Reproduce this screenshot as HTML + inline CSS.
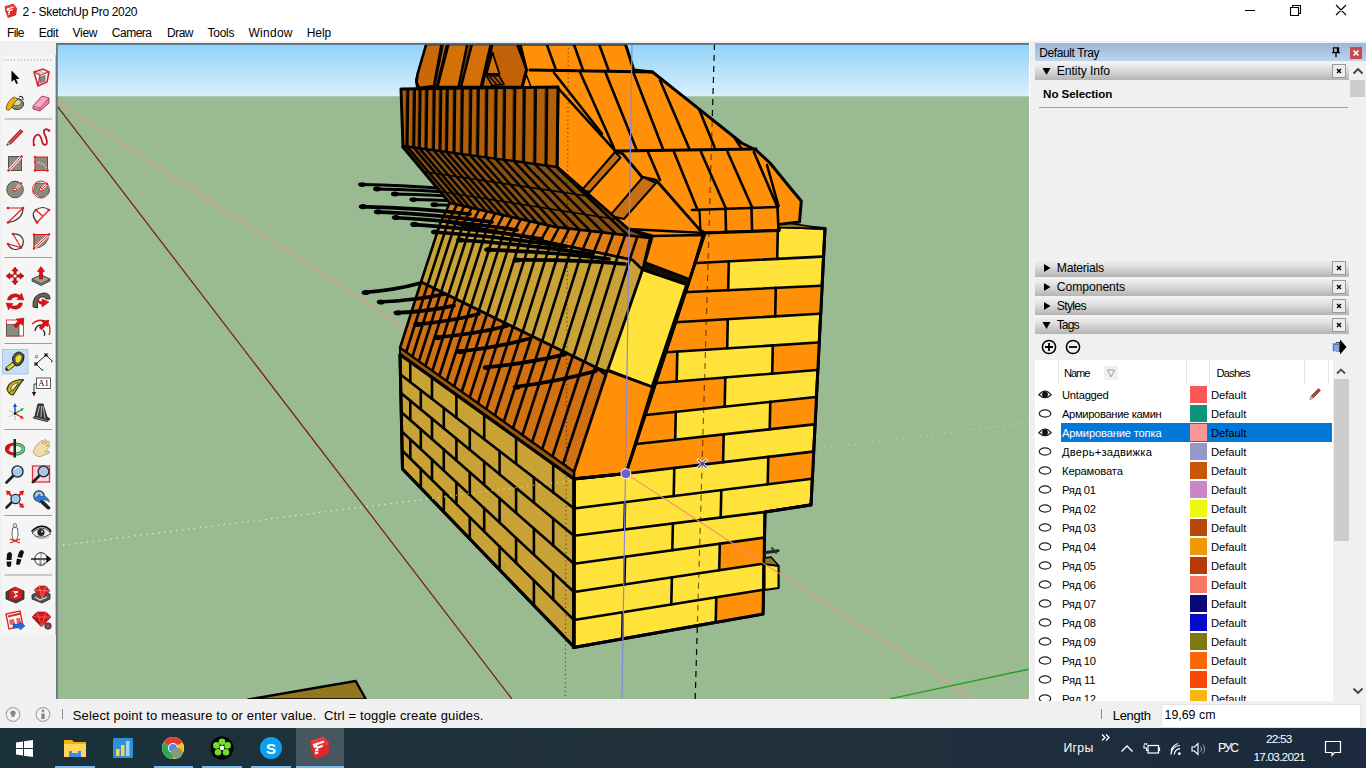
<!DOCTYPE html>
<html><head><meta charset="utf-8"><title>2 - SketchUp Pro 2020</title>
<style>
*{box-sizing:border-box;margin:0;padding:0}
html,body{width:1366px;height:768px;overflow:hidden;background:#f0f0f0;font-family:"Liberation Sans",sans-serif;font-size:12px;color:#000}
div,span{white-space:nowrap}
.a{position:absolute}
#title{position:absolute;left:0;top:0;width:1366px;height:22px;background:#fff}
#menu{position:absolute;left:0;top:22px;width:1366px;height:19px;background:#fff}
#menu span{position:absolute;top:4px;font-size:12px;letter-spacing:-0.3px}
#vp{position:absolute;left:56px;top:43px;width:974px;height:656px;overflow:hidden;background:#9aba92}
#tb{position:absolute;left:2px;top:55px;width:53px;height:580px;background:#f5f5f5;border-right:1px solid #c4c4c4;box-sizing:content-box}
#status{position:absolute;left:0;top:699px;width:1366px;height:29px;background:#f0f0f0}
#task{position:absolute;left:0;top:728px;width:1366px;height:40px;background:linear-gradient(90deg,#1a313a 0%,#22323c 50%,#1b2a3d 100%)}
#tray{position:absolute;left:1035px;top:43px;width:331px;height:658px;z-index:2;background:#f0f0f0;overflow:hidden}
.hd{position:absolute;left:0;width:314px;height:18px;background:linear-gradient(#f4f4f4 0%,#e2e2e2 35%,#b4b4b4 100%);font-size:12.5px}
.row{position:absolute;left:0;width:296px;height:19px;font-size:11.6px}
.row .sw{position:absolute;left:155px;top:1px;width:17px;height:17px}
</style></head><body>
<div id="title"><svg class="a" style="left:4px;top:3px" width="14" height="16" viewBox="0 0 22 24"><path d="M1,5 L14.5,0.5 L20.5,8 L19,18.5 L6,23 L2,12.5 Z" fill="#e3262b"/><path d="M1,5 L14.5,0.5 L20.5,8 L8,11.5Z" fill="#f0383c"/><path d="M3.5,8.3 L14.5,4.8 L15.2,6.6 L8,9 L8.4,10.6 L13.5,9 L14,10.8 L9,12.4 L9.6,14.6 L6.4,15.6 L5.8,13.6 L7.6,13 L7.2,11.4 L5,12 Z" fill="#fff"/><path d="M5.6,16.6 L9,15.5 L9.5,17.3 L6.2,18.4Z" fill="#fff"/></svg>
<span class="a" style="left:22.5px;top:4.5px;font-size:12px;letter-spacing:-0.32px;">2 - SketchUp Pro 2020</span>
<svg class="a" style="left:1230px;top:0" width="136" height="22" viewBox="0 0 136 22"><path d="M15,10.5 H25 M60.5,7.5 h8 v8 h-8 z M62.5,7.5 v-2 h8 v8 h-2 M106,5 l10,10 M116,5 l-10,10" stroke="#000" stroke-width="1.1" fill="none"/></svg></div>
<div id="menu"><span class="a" style="left:7.1px;top:3.5px;font-size:12px;letter-spacing:-0.65px;">File</span><span class="a" style="left:38.7px;top:3.5px;font-size:12px;letter-spacing:-0.30px;">Edit</span><span class="a" style="left:72.5px;top:3.5px;font-size:12px;letter-spacing:-0.27px;">View</span><span class="a" style="left:111.8px;top:3.5px;font-size:12px;letter-spacing:-0.50px;">Camera</span><span class="a" style="left:167.0px;top:3.5px;font-size:12px;letter-spacing:-0.51px;">Draw</span><span class="a" style="left:207.5px;top:3.5px;font-size:12px;letter-spacing:-0.25px;">Tools</span><span class="a" style="left:248.5px;top:3.5px;font-size:12px;letter-spacing:0.26px;">Window</span><span class="a" style="left:306.8px;top:3.5px;font-size:12px;letter-spacing:-0.13px;">Help</span></div>
<div id="tb"><svg class="a" style="left:0;top:0" width="54" height="580" viewBox="2 55 54 580">
<line x1="4" y1="60" x2="53" y2="60" stroke="#a8a8a8" stroke-width="1.2" stroke-dasharray="1.4 1.9"/>
<rect x="2.5" y="349.5" width="25.5" height="24.5" fill="#c7ddf5" stroke="#a4c8f0" stroke-width="1"/>
<line x1="4.5" y1="119" x2="52" y2="119" stroke="#9c9c9c" stroke-width="1.2"/>
<line x1="4.5" y1="257.5" x2="52" y2="257.5" stroke="#9c9c9c" stroke-width="1.2"/>
<line x1="4.5" y1="343.5" x2="52" y2="343.5" stroke="#9c9c9c" stroke-width="1.2"/>
<line x1="4.5" y1="429.5" x2="52" y2="429.5" stroke="#9c9c9c" stroke-width="1.2"/>
<line x1="4.5" y1="515.5" x2="52" y2="515.5" stroke="#9c9c9c" stroke-width="1.2"/>
<line x1="4.5" y1="575" x2="52" y2="575" stroke="#9c9c9c" stroke-width="1.2"/>
<g transform="translate(15,77)"><path d="M-3.5,-6.5 L-3.5,5 L-0.8,2.6 L1.2,7 L3,6.2 L1,1.9 L4.6,1.7 Z" fill="#000"/></g>
<g transform="translate(41,77)"><path d="M-7,-5 L2,-8 L8,-5 L6,5 L-3,9 Z" fill="none" stroke="#d82030" stroke-width="1.6"/><path d="M-7,-5 L-1,-2 L8,-5 M-1,-2 L-3,9" stroke="#d82030" stroke-width="1.3" fill="none"/><path d="M-1,0 L4,-1.5 L4,4 L-1,6Z" fill="#8a8a80" stroke="#555" stroke-width=".6"/><path d="M-4,-4 L0,-5.5 L4,-4 L0,-2.5Z" fill="#ddd" stroke="#888" stroke-width=".5"/></g>
<g transform="translate(15,103)"><ellipse cx="2" cy="1" rx="6.5" ry="5.5" fill="#8c8c70" stroke="#333" stroke-width="1"/><ellipse cx="1.5" cy="-0.5" rx="4.5" ry="3" fill="#d8d8b8" stroke="#444" stroke-width=".6"/><path d="M-1,-6 Q-8,-2 -9,6 Q-6,9 -3,4 Q-1,-1 3,-4 Z" fill="#f0b010" stroke="#604000" stroke-width=".8"/><path d="M4,-6 Q8,-8 8,-3" fill="none" stroke="#333" stroke-width="1.2"/></g>
<g transform="translate(41,103)"><path d="M-8,3 L1,-7 L8,-5 L8,0 L-1,8 L-8,6 Z" fill="#f080a0" stroke="#803048" stroke-width=".8"/><path d="M-8,3 L-1,5 L8,-5 M-1,5 L-1,8" stroke="#a04060" stroke-width=".7" fill="none"/><path d="M-7,3 L1.5,-6.2 L7,-4.8 L-1,4.4Z" fill="#f8a8c0"/></g>
<g transform="translate(15,137)"><path d="M-6.5,5 L5.5,-7.5 L8,-5.5 L-4.5,7.2 Z" fill="#d02828" stroke="#701010" stroke-width=".7"/><path d="M-6.5,5 L-4.5,7.2 L-8.5,8.5Z" fill="#e8c8a0" stroke="#555" stroke-width=".5"/><path d="M-8.5,8.5 L-7.4,6.6 L-6.6,7.8Z" fill="#222"/><path d="M-5.5,6 L6.5,-6.5" stroke="#f08080" stroke-width=".8"/></g>
<g transform="translate(41,137)"><path d="M-7,8 C-9,1 -4,-5 -1,-1 C2,3 0,8 4,8 C8,7 5,0 3,-4 C2,-8 6,-9 8,-6" fill="none" stroke="#c01820" stroke-width="1.7"/><circle cx="-7" cy="8" r="1.3" fill="#e01818"/><circle cx="8" cy="-6.5" r="1.3" fill="#e01818"/></g>
<g transform="translate(15,163)"><rect x="-6.5" y="-6.5" width="13" height="14" fill="#8c8c7c" stroke="#505048" stroke-width="1"/><path d="M-6.5,7.5 L6.5,-6.5" stroke="#fff" stroke-width="2.6"/><path d="M-6.5,7.5 L6.5,-6.5" stroke="#e01818" stroke-width="1" /><circle cx="-6.5" cy="7.5" r="1.2" fill="#e01818"/><circle cx="6.5" cy="-6.5" r="1.2" fill="#e01818"/></g>
<g transform="translate(41,163)"><rect x="-6" y="-6" width="12.5" height="13.5" fill="#8c8c7c" stroke="#e01818" stroke-width="1"/><path d="M-6,-1 Q4,-1 6.5,7.5" fill="none" stroke="#f0b0b0" stroke-width="1.4" stroke-dasharray="2 1"/><circle cx="-6" cy="-6" r="1.2" fill="#e01818"/><circle cx="-6" cy="7.5" r="1.2" fill="#e01818"/><circle cx="6.5" cy="7.5" r="1.2" fill="#e01818"/><circle cx="-6" cy="-1" r="1.1" fill="#e01818"/></g>
<g transform="translate(15,189)"><circle cx="0" cy="0.5" r="8.3" fill="#8c8c7c" stroke="#505048" stroke-width="1"/><path d="M0,0.5 L6,-5.5" stroke="#fff" stroke-width="2.4"/><path d="M0,0.5 L6,-5.5" stroke="#e01818" stroke-width="1"/><circle cx="0" cy="0.5" r="1.5" fill="#fff" stroke="#e01818" stroke-width="1"/><circle cx="6" cy="-5.5" r="1.2" fill="#e01818"/></g>
<g transform="translate(41,189)"><circle cx="0" cy="0.5" r="8.5" fill="#f8e8e8" stroke="#e01818" stroke-width=".9"/><path d="M-5,-6 L5.5,-5.5 L8.3,3 L0.5,9 L-7.8,3 Z" fill="#8c8c7c" stroke="#505048" stroke-width=".8"/><path d="M0,0.5 L6,-5" stroke="#fff" stroke-width="2.4"/><path d="M0,0.5 L6,-5" stroke="#e01818" stroke-width="1"/><circle cx="0" cy="0.5" r="1.5" fill="#fff" stroke="#e01818" stroke-width="1"/><circle cx="6" cy="-5" r="1.2" fill="#e01818"/></g>
<g transform="translate(15,215)"><path d="M-7,7.5 L8,-7 L-7,-7" fill="none" stroke="#e01818" stroke-width="1.1"/><path d="M8,-7 Q8,5 -7,7.5" fill="none" stroke="#333" stroke-width="1.2"/><circle cx="-7" cy="7.5" r="1.3" fill="#e01818"/><circle cx="8" cy="-7" r="1.3" fill="#e01818"/><circle cx="-7" cy="-7" r="1.3" fill="#e01818"/></g>
<g transform="translate(41,215)"><path d="M-4,7.5 L8,-5 M-5,-5 L2,1.5" fill="none" stroke="#e01818" stroke-width="1.1"/><path d="M-4,7.5 Q-11,-1 -5,-5 Q2,-10 8,-5" fill="none" stroke="#333" stroke-width="1.2"/><circle cx="-4" cy="7.5" r="1.3" fill="#e01818"/><circle cx="8" cy="-5" r="1.3" fill="#e01818"/><circle cx="-5" cy="-5" r="1.3" fill="#e01818"/></g>
<g transform="translate(15,241)"><path d="M-7,3 L6,6.5 L-2,-7" fill="none" stroke="#e01818" stroke-width="1.1"/><path d="M-2,-7 C12,-8 11,9 -0,8.5 Q-5,8 -7,3" fill="none" stroke="#333" stroke-width="1.2"/><circle cx="-7" cy="3" r="1.3" fill="#e01818"/><circle cx="6" cy="6.5" r="1.3" fill="#e01818"/><circle cx="-2" cy="-7" r="1.3" fill="#e01818"/></g>
<g transform="translate(41,241)"><path d="M-7,-6.5 L8,-6.5 Q7,6 -7,7.5 Z" fill="#8c8c7c" stroke="#505048" stroke-width=".8"/><path d="M-7,7.5 L8,-6.5" stroke="#fff" stroke-width="2.4"/><path d="M-7,7.5 L8,-6.5 M-7,-6.5 L8,-6.5 M-7,-6.5 L-7,7.5" stroke="#e01818" stroke-width="1" fill="none"/><circle cx="-7" cy="7.5" r="1.2" fill="#e01818"/><circle cx="8" cy="-6.5" r="1.2" fill="#e01818"/><circle cx="-7" cy="-6.5" r="1.2" fill="#e01818"/></g>
<g transform="translate(15,276)"><path d="M0,-9 L3.2,-5 L1.2,-5 L1.2,-1.2 L5,-1.2 L5,-3.2 L9,0 L5,3.2 L5,1.2 L1.2,1.2 L1.2,5 L3.2,5 L0,9 L-3.2,5 L-1.2,5 L-1.2,1.2 L-5,1.2 L-5,3.2 L-9,0 L-5,-3.2 L-5,-1.2 L-1.2,-1.2 L-1.2,-5 L-3.2,-5 Z" fill="#d81010" stroke="#800" stroke-width=".5"/><circle r="1.6" fill="#fff"/></g>
<g transform="translate(41,276)"><path d="M-9,3 L0,-1 L9,3 L9,5 L0,9.5 L-9,5Z" fill="#77776a" stroke="#333" stroke-width=".8"/><path d="M-9,3 L0,-1 L9,3 L0,7.5Z" fill="#a0a090" stroke="#333" stroke-width=".6"/><path d="M0,-9.5 L3.6,-4.5 L1.6,-4.5 L1.6,3 L-1.6,3 L-1.6,-4.5 L-3.6,-4.5Z" fill="#e01010" stroke="#800" stroke-width=".5"/></g>
<g transform="translate(15,301)"><path d="M-7.5,-1 A7.5,6.5 0 0 1 5,-5.5 L6.5,-8 L9,-1 L2,-1.5 L3.5,-3.5 A5,4 0 0 0 -4,-1Z" fill="#e01010" stroke="#800" stroke-width=".4"/><path d="M7.5,2 A7.5,6.5 0 0 1 -5,6.5 L-6.5,9 L-9,2 L-2,2.5 L-3.5,4.5 A5,4 0 0 0 4,2Z" fill="#e01010" stroke="#800" stroke-width=".4"/></g>
<g transform="translate(41,301)"><path d="M-8,6 Q-9,-7 3,-8 Q9,-8 9,-2 L5,-2 Q4,-5 0,-4 Q-4,-3 -3.5,7 Z" fill="#666658" stroke="#222" stroke-width=".9"/><path d="M8,1 L1,6 L1,3.5 Q-3,3 -3,-1 Q0,1.5 1,0.5 L1,-2 Z" fill="#e01010" stroke="#800" stroke-width=".4"/></g>
<g transform="translate(15,327)"><rect x="-8.5" y="-7" width="17" height="16" fill="#fff" stroke="#e04040" stroke-width="1"/><rect x="-8.5" y="-2.5" width="12.5" height="11.5" fill="#8c8c7c" stroke="#505048" stroke-width=".8"/><path d="M9,-9 L7.5,-1.5 L5.5,-3.5 L1,1 L-1.5,-1.5 L3,-6 L1,-8Z" fill="#e01010" stroke="#800" stroke-width=".4"/></g>
<g transform="translate(41,327)"><path d="M-9,-3 Q0,-11 8,-2 Q10,3 8,8" fill="none" stroke="#e02020" stroke-width="1.3"/><path d="M-6,4 Q-5,-2 0,-2 M2,3 Q5,6 3,9" fill="none" stroke="#222" stroke-width="1.3"/><path d="M8,-7 L6.5,0 L4.8,-1.8 L0.5,3 L-2,0.5 L2.3,-4.3 L0.5,-6Z" fill="#e01010" stroke="#800" stroke-width=".4"/></g>
<g transform="translate(15,361)"><path d="M-9,6.5 L-2,1 L0.5,4 L-6.5,9.5Z" fill="#e8d820" stroke="#222" stroke-width=".9"/><path d="M-9,6.5 L-6.5,9.5 L-8.5,10 L-10,8Z" fill="#222"/><path d="M-2.5,-3 Q-1,-9 5,-9 L9,-6 Q10,0 5,4 L1,5 Q-3,2 -2.5,-3Z" fill="#555" stroke="#111" stroke-width=".9"/><path d="M0,-2.5 Q1,-6.5 5,-6.5 L7,-4.8 Q7,-1 4,1.8 L1.8,2.2 Q-0.3,0.5 0,-2.5Z" fill="#f0e020" stroke="#333" stroke-width=".5"/></g>
<g transform="translate(41,361)"><path d="M-5,3 L5,-6 M-5,3 L1,9 M5,-6 L11,0" stroke="#222" stroke-width="1" fill="none"/><path d="M-6.5,1.5 L-3.5,4.5 M-6.5,4.5 L-3.5,1.5 M3.5,-7.5 L6.5,-4.5 M3.5,-4.5 L6.5,-7.5" stroke="#111" stroke-width="1.3"/><circle cx="1.5" cy="9" r="1.1" fill="#30b030"/><circle cx="11" cy="0.5" r="1.1" fill="#30b030"/><text x="-6" y="-3.5" font-size="6" font-family="Liberation Serif,serif" font-style="italic" fill="#222">a</text></g>
<g transform="translate(15,387)"><path d="M-8,2 Q-6,-7 8,-7.5 L-2,8 Q-7,7 -8,2Z" fill="#c8b818" stroke="#3a3408" stroke-width="1.2"/><path d="M-4.5,2 Q-3,-3.5 3.5,-4.5 L-2,4 Q-4,3.5 -4.5,2Z" fill="#f4f0c0" stroke="#3a3408" stroke-width=".7"/><path d="M-6,6 L9,-7" stroke="#3a3408" stroke-width=".8"/></g>
<g transform="translate(41,387)"><rect x="-4.5" y="-9" width="14" height="10.5" fill="#fff" stroke="#444" stroke-width=".9"/><text x="2.5" y="-0.8" font-size="8.5" font-family="Liberation Serif,serif" fill="#000" text-anchor="middle">A1</text><path d="M-4.5,-3 L-7,-3 L-7,6" fill="none" stroke="#222" stroke-width=".9"/><path d="M-9,5 L-5,5 L-7,9.5Z" fill="#111"/></g>
<g transform="translate(15,413)"><path d="M0,0.5 L0,-8" stroke="#1848c8" stroke-width="1.4"/><path d="M0,-10 L2,-6 L-2,-6Z" fill="#1848c8"/><path d="M0,0.5 L7,-3.5" stroke="#20a030" stroke-width="1.3"/><path d="M9,-4.8 L5.5,-4.5 L6.8,-1.8Z" fill="#20a030"/><path d="M0,0.5 L7,4.5" stroke="#d81818" stroke-width="1.3"/><path d="M9,5.8 L5.2,5.4 L6.8,2.6Z" fill="#d81818"/><path d="M0,0.5 L-6,-2.5" stroke="#e08080" stroke-width=".9" stroke-dasharray="1.5 1"/><path d="M0,0.5 L-6,4" stroke="#80c080" stroke-width=".9" stroke-dasharray="1.5 1"/><path d="M0,0.5 L0,8" stroke="#8098d8" stroke-width=".9" stroke-dasharray="1.5 1"/><circle cx="0" cy="0.5" r="1.3" fill="#111"/></g>
<g transform="translate(41,413)"><path d="M-3,-9 L2,-9 L6,4 L9,6 L6,8.5 L-8,5 L-6,3Z" fill="#3a3a34" stroke="#111" stroke-width=".8"/><path d="M-1.5,-7 L-4,3 M0.5,-7 L0,4 M2,-7 L4,5" stroke="#bbb" stroke-width="1" fill="none"/><path d="M-7,4.5 L6,7.5" stroke="#888" stroke-width="1"/></g>
<g transform="translate(15,448)"><ellipse cx="0" cy="1" rx="8.5" ry="5" fill="none" stroke="#c81818" stroke-width="3.2"/><path d="M0,-4 A8.5,5 0 0 1 0,6" fill="none" stroke="#30a858" stroke-width="3.2"/><path d="M0,-4 A8.5,5 0 0 1 0,6" fill="none" stroke="#70d898" stroke-width="1.2"/><path d="M-1.5,-9 L1,-9 L1,9.5 L-1.5,9.5Z" fill="#222"/><path d="M-9.5,-2 L-4,-3 L-6,2.5Z" fill="#c81818"/></g>
<g transform="translate(41,448)"><path d="M-8,4 Q-6,-2 -2,-5 L1,-8 L2.5,-7 L1,-4 L4,-8.5 L5.8,-7.5 L3.5,-3.5 L7,-7 L8.5,-5.8 L5.5,-1.5 L8,-3.5 L9,-2 L4,4 L8,3 L8,5 L1,8 Q-5,10 -8,4Z" fill="#f0dca8" stroke="#b09858" stroke-width=".8"/></g>
<g transform="translate(15,474)"><path d="M-8.5,8.5 L-2,2" stroke="#222" stroke-width="2.8" stroke-linecap="round"/><circle cx="2.5" cy="-2.5" r="5.6" fill="#a8c8e8" stroke="#223" stroke-width="1.3"/><path d="M-0.5,-4.5 Q1,-6.8 4,-6.5" stroke="#fff" stroke-width="1" fill="none"/></g>
<g transform="translate(41,474)"><rect x="-8.5" y="-8" width="17" height="16" fill="#f8d8d8" stroke="#e03040" stroke-width="1.3"/><path d="M-8,8 L-2,2" stroke="#222" stroke-width="2.8" stroke-linecap="round"/><circle cx="2.5" cy="-2.5" r="5.4" fill="#a8c8e8" stroke="#223" stroke-width="1.3"/></g>
<g transform="translate(15,499)"><path d="M-8.5,8.5 L-3,3" stroke="#222" stroke-width="2.6" stroke-linecap="round"/><circle cx="0.5" cy="0" r="4.6" fill="#a8c8e8" stroke="#223" stroke-width="1.2"/><path d="M-9,-8.5 L-4,-7.5 L-5.2,-6.2 L-3,-4 L-4.5,-2.5 L-6.7,-4.7 L-8,-3.5Z M9,-8.5 L8,-3.5 L6.7,-4.7 L4.5,-2.5 L3,-4 L5.2,-6.2 L4,-7.5Z M9,9 L4,8 L5.2,6.7 L3.5,5 L5,3.5 L6.7,5.2 L8,4Z" fill="#e01818"/></g>
<g transform="translate(41,499)"><path d="M-1,9 L6,2.5" stroke="#222" stroke-width="2.8" stroke-linecap="round" transform="translate(2,0) scale(-1,1) translate(-4,0)"/><circle cx="-2" cy="-3" r="5.2" fill="#a8c8e8" stroke="#223" stroke-width="1.2"/><path d="M-7,0 L-1,-5 L-1,-2.5 Q7,-4 8.5,3 Q5,0 -1,1.5 L-1,4Z" fill="#2080e0" stroke="#104080" stroke-width=".5"/><path d="M2,3 L8,9" stroke="#222" stroke-width="2.8" stroke-linecap="round"/></g>
<g transform="translate(15,533)"><ellipse cx="0" cy="-7.5" rx="1.6" ry="1.9" fill="#fff" stroke="#444" stroke-width=".8"/><path d="M-2.5,-5 Q0,-6 2.5,-5 L3,2 L1.8,7 L-1.8,7 L-3,2Z" fill="#fff" stroke="#444" stroke-width=".8"/><path d="M-5,6 L5,10 M5,6 L-5,10" stroke="#e01818" stroke-width="1.2"/></g>
<g transform="translate(41,533)"><path d="M-9,0 Q-2,-6.5 5,-4 Q9,-2 9.5,1 Q4,5 -2,4 Q-6,3.5 -9,0Z" fill="#f0f0f0" stroke="#222" stroke-width=".8"/><path d="M-9.5,-1.5 Q-2,-9 6,-5.5 Q9,-4 10,-1" fill="none" stroke="#111" stroke-width="1.6"/><circle cx="0" cy="-0.5" r="3.6" fill="#222"/><circle cx="1" cy="-1.5" r="1" fill="#ddd"/><path d="M-7,3 Q0,8 8,3.5" fill="none" stroke="#999" stroke-width=".8"/></g>
<g transform="translate(15,559)"><path d="M-8,-5 Q-5,-9 -3,-5 L-3.5,1 L-8.5,1Z M-8.5,2.5 L-3.5,2.5 L-4,7 Q-6,9 -8,7Z" fill="#111"/><path d="M3,-6 Q6,-10 8,-6 L6,0 L1.5,-1Z M1,0.5 L5.5,1.5 L4,6 Q2,8 0,6Z" fill="#111" transform="translate(1,-1)"/></g>
<g transform="translate(41,559)"><circle cx="0" cy="0" r="6.3" fill="#fff" stroke="#222" stroke-width="1"/><path d="M-10,0 L9,0" stroke="#111" stroke-width="1.4"/><path d="M10.5,0 L5.5,-4 L5.5,4Z" fill="#111"/><path d="M0,-6 L0,6" stroke="#555" stroke-width=".7"/><text x="-2.3" y="4.8" font-size="4.5" font-family="Liberation Sans,sans-serif" fill="#333">1</text><text x="1.8" y="4.8" font-size="4.5" font-family="Liberation Sans,sans-serif" fill="#333">1</text></g>
<g transform="translate(15,594)"><path d="M-9,-2 L-2,-6 L9,-3 L9,5 L1,9 L-9,5Z" fill="#44443c" stroke="#222" stroke-width=".8"/><path d="M-6,-3 L0,-7 L7,-4 L7,4 L0,7 L-6,4Z" fill="#d82020" stroke="#801010" stroke-width=".6"/><path d="M-2,-3 L3,-3 L3,-1 L0,-1 L3,2 L-1,4 L-1,2 L1,1.5Z" fill="#fff" opacity=".9"/></g>
<g transform="translate(41,594)"><path d="M-9,1 L-2,-3 L9,0 L9,5 L1,9 L-9,5Z" fill="#55554c" stroke="#222" stroke-width=".8"/><path d="M-7,-4 L-2,-8 L5,-8 L9,-3 L1,4Z" fill="#d82020" stroke="#801010" stroke-width=".6"/><path d="M-7,-4 L9,-3 M-2,-8 L1,4 M5,-8 L1,4" stroke="#f8a0a0" stroke-width=".6" fill="none"/><path d="M-6,3 L-1,6 L6,3" stroke="#ddd" stroke-width="1.2" fill="none"/></g>
<g transform="translate(15,620)"><path d="M-9,-6 L5,-9 L8,6 L-6,9Z" fill="#fff" stroke="#e02828" stroke-width="1.4"/><path d="M-7,-3.5 L5,-6.2" stroke="#e02828" stroke-width="2"/><path d="M-6,0 L-1,-1 L0,4 L-5,5Z M1,-1.5 L5,-2.3 L6.5,4.5 L2.5,5.3Z" fill="#e86060"/><path d="M-2,4 L5,4 L5,2 L10,6 L5,10 L5,8 L-2,8Z" fill="#1870e0" stroke="#0c3c80" stroke-width=".5"/></g>
<g transform="translate(41,620)"><path d="M-9,-3 L-4,-8 L5,-8 L10,-3 L0.5,7Z" fill="#d81818" stroke="#801010" stroke-width=".6"/><path d="M-9,-3 L10,-3 M-4,-8 L0.5,7 M5,-8 L0.5,7" stroke="#f88" stroke-width=".6" fill="none"/><path d="M-9,-3 L0.5,7 L-3,-3Z" fill="#a01010" opacity=".6"/><circle cx="7" cy="6" r="3.3" fill="#555" stroke="#222" stroke-width=".6"/><rect x="5.6" y="4.6" width="2.8" height="2.8" fill="#e03030"/></g>
</svg></div>
<div id="vp">
<svg width="974" height="656" viewBox="56 43 974 656" style="position:absolute;left:0;top:0">
<defs><linearGradient id="sky" x1="0" y1="0" x2="0" y2="1"><stop offset="0" stop-color="#90d2f8"/><stop offset="1" stop-color="#dbeffc"/></linearGradient></defs>
<rect x="55" y="43" width="977" height="54" fill="url(#sky)"/>
<rect x="55" y="96.3" width="977" height="604" fill="#9aba92"/>
<line x1="57.8" y1="101.6" x2="972.0" y2="698.1" stroke="#dc9c8c" stroke-width="1.35" stroke-linecap="round" />
<line x1="57.8" y1="106.8" x2="511.5" y2="698.4" stroke="#7c2014" stroke-width="1.3" stroke-linecap="round" />
<line x1="890.9" y1="698.6" x2="1029.0" y2="669.2" stroke="#22a022" stroke-width="1.4" stroke-linecap="round" />
<line x1="57" y1="545.9" x2="1030" y2="422.3" stroke="#d8f0c0" stroke-width="1.1" stroke-dasharray="1.2 4.8" opacity="0.6"/>
<polygon points="248.3,699.5 355.7,681.0 366.0,699.5" fill="#907820" stroke="#000" stroke-width="2.4" stroke-linejoin="round" />
<polygon points="426.3,44.0 520.0,44.0 530.0,70.0 545.0,88.0 417.0,88.0 416.0,80.0 417.6,74.0" fill="#7a3c04" stroke="#000" stroke-width="2" stroke-linejoin="round" />
<polygon points="426.3,44.0 441.6,44.0 434.0,86.0 419.0,88.0 416.5,82.0 417.6,74.0" fill="#c86808" stroke="#000" stroke-width="2.6" stroke-linejoin="round" />
<polygon points="443.5,44.0 446.5,44.0 436.5,86.0 435.0,86.0" fill="#c86808" stroke="#000" stroke-width="1.2" stroke-linejoin="round" />
<polygon points="448.6,44.0 467.3,44.0 458.5,87.0 437.5,87.0" fill="#d47008" stroke="#000" stroke-width="2.4" stroke-linejoin="round" />
<polygon points="472.0,44.0 490.7,44.0 480.8,87.0 461.0,87.0" fill="#d47008" stroke="#000" stroke-width="2.4" stroke-linejoin="round" />
<polygon points="492.5,44.0 517.0,44.0 526.5,69.3 521.8,87.0 482.0,87.0" fill="#c26208" stroke="#000" stroke-width="2.4" stroke-linejoin="round" />
<polygon points="492.5,52.5 499.5,74.0 486.7,74.0" fill="#d47410" stroke="#000" stroke-width="1.8" stroke-linejoin="round" />
<polygon points="486.7,76.0 499.0,75.5 504.0,84.5 492.0,85.5" fill="#a85408" stroke="#000" stroke-width="1.6" stroke-linejoin="round" />
<line x1="490.0" y1="77.0" x2="497.0" y2="85.0" stroke="#000" stroke-width="1.2" stroke-linecap="round" />
<line x1="494.0" y1="76.5" x2="501.0" y2="84.5" stroke="#000" stroke-width="1.2" stroke-linecap="round" />
<polygon points="520.0,44.0 625.4,44.0 633.8,70.0 652.5,72.0 699.5,109.4 741.7,143.0 756.0,150.0 770.0,163.0 792.0,190.0 801.3,201.0 799.5,222.0 779.0,224.5 779.0,232.0 705.0,234.0 690.0,280.0 645.0,263.0 652.0,236.0 628.0,229.0 557.0,167.0 558.0,88.0 522.0,88.0 526.5,70.0" fill="#ff9008" stroke="#000" stroke-width="3" stroke-linejoin="round" />
<path d="M521.8,87 L526.5,75 L531,87" fill="none" stroke="#000" stroke-width="1.6" stroke-linecap="round" stroke-linejoin="round" />
<line x1="546.6" y1="44.0" x2="556.0" y2="70.0" stroke="#000" stroke-width="2.6" stroke-linecap="round" />
<line x1="573.8" y1="44.0" x2="583.0" y2="70.0" stroke="#000" stroke-width="2.6" stroke-linecap="round" />
<line x1="599.0" y1="44.0" x2="608.5" y2="70.0" stroke="#000" stroke-width="2.6" stroke-linecap="round" />
<line x1="530.0" y1="70.0" x2="652.5" y2="72.0" stroke="#000" stroke-width="3" stroke-linecap="round" />
<line x1="554.0" y1="72.8" x2="602.0" y2="133.8" stroke="#000" stroke-width="2.6" stroke-linecap="round" />
<line x1="580.3" y1="72.8" x2="614.0" y2="148.0" stroke="#000" stroke-width="2.6" stroke-linecap="round" />
<line x1="605.6" y1="72.8" x2="636.6" y2="149.7" stroke="#000" stroke-width="2.6" stroke-linecap="round" />
<line x1="632.8" y1="71.0" x2="662.9" y2="148.8" stroke="#000" stroke-width="2.6" stroke-linecap="round" />
<line x1="660.0" y1="80.3" x2="689.0" y2="147.9" stroke="#000" stroke-width="2.6" stroke-linecap="round" />
<line x1="699.5" y1="110.3" x2="714.5" y2="146.9" stroke="#000" stroke-width="2.6" stroke-linecap="round" />
<line x1="735.0" y1="138.5" x2="741.7" y2="148.8" stroke="#000" stroke-width="2.6" stroke-linecap="round" />
<line x1="557.8" y1="87.8" x2="615.0" y2="150.7" stroke="#000" stroke-width="2.6" stroke-linecap="round" />
<line x1="615.0" y1="151.0" x2="756.0" y2="149.0" stroke="#000" stroke-width="3" stroke-linecap="round" />
<line x1="648.0" y1="152.0" x2="660.0" y2="180.0" stroke="#000" stroke-width="2.6" stroke-linecap="round" />
<line x1="674.0" y1="152.0" x2="697.6" y2="210.0" stroke="#000" stroke-width="2.6" stroke-linecap="round" />
<line x1="701.0" y1="152.0" x2="725.7" y2="208.0" stroke="#000" stroke-width="2.6" stroke-linecap="round" />
<line x1="727.6" y1="152.0" x2="752.0" y2="207.0" stroke="#000" stroke-width="2.6" stroke-linecap="round" />
<line x1="753.9" y1="152.0" x2="777.0" y2="206.0" stroke="#000" stroke-width="2.6" stroke-linecap="round" />
<line x1="767.0" y1="165.0" x2="778.5" y2="206.0" stroke="#000" stroke-width="2.6" stroke-linecap="round" />
<line x1="692.0" y1="210.0" x2="777.5" y2="207.0" stroke="#000" stroke-width="2.6" stroke-linecap="round" />
<line x1="699.5" y1="211.0" x2="700.5" y2="231.0" stroke="#000" stroke-width="2.2" stroke-linecap="round" />
<line x1="725.5" y1="209.0" x2="726.0" y2="231.0" stroke="#000" stroke-width="2.6" stroke-linecap="round" />
<line x1="751.5" y1="208.0" x2="752.0" y2="230.0" stroke="#000" stroke-width="2.6" stroke-linecap="round" />
<line x1="777.5" y1="207.0" x2="778.5" y2="230.0" stroke="#000" stroke-width="2.6" stroke-linecap="round" />
<path d="M615,151 L622.5,153.7 L642,177 L656,180 L699.5,229.7 L705,233" fill="none" stroke="#000" stroke-width="2.8" stroke-linecap="round" stroke-linejoin="round" />
<polygon points="582.0,190.0 589.7,192.0 620.6,157.5 615.0,152.0" fill="#c87010" stroke="#000" stroke-width="2" stroke-linejoin="round" />
<polygon points="610.0,215.6 624.0,219.0 656.0,183.0 643.0,177.0" fill="#c87010" stroke="#000" stroke-width="2" stroke-linejoin="round" />
<line x1="628.0" y1="229.0" x2="705.0" y2="233.0" stroke="#000" stroke-width="2.6" stroke-linecap="round" />
<polygon points="645.0,262.5 690.0,279.4 687.0,285.5 642.5,269.7" fill="#1a0e00" stroke="#000" stroke-width="2" stroke-linejoin="round" />
<polygon points="652.5,236.0 703.0,235.0 690.0,279.4 645.0,262.5" fill="#ff9008" stroke="#000" stroke-width="2.6" stroke-linejoin="round" />
<polygon points="703.0,235.0 706.0,238.0 691.0,286.0 689.0,281.0" fill="#c87010" stroke="#000" stroke-width="1.5" stroke-linejoin="round" />
<polygon points="401.0,89.0 558.0,87.0 557.0,168.0 403.0,147.0" fill="#b26008" stroke="#000" stroke-width="3" stroke-linejoin="round" />
<line x1="406.4" y1="90.9" x2="405.8" y2="146.7" stroke="#5e2e02" stroke-width="1.6" stroke-linecap="round" />
<line x1="408.0" y1="89.9" x2="407.2" y2="147.7" stroke="#000" stroke-width="2.7" stroke-linecap="round" />
<line x1="413.1" y1="90.8" x2="412.5" y2="147.6" stroke="#5e2e02" stroke-width="1.6" stroke-linecap="round" />
<line x1="414.7" y1="89.8" x2="413.9" y2="148.6" stroke="#000" stroke-width="2.7" stroke-linecap="round" />
<line x1="418.7" y1="90.8" x2="418.1" y2="148.4" stroke="#5e2e02" stroke-width="1.6" stroke-linecap="round" />
<line x1="420.3" y1="89.8" x2="419.5" y2="149.4" stroke="#000" stroke-width="2.7" stroke-linecap="round" />
<line x1="425.4" y1="90.7" x2="424.8" y2="149.3" stroke="#5e2e02" stroke-width="1.6" stroke-linecap="round" />
<line x1="427.0" y1="89.7" x2="426.2" y2="150.3" stroke="#000" stroke-width="2.7" stroke-linecap="round" />
<line x1="432.8" y1="90.6" x2="432.2" y2="150.3" stroke="#5e2e02" stroke-width="1.6" stroke-linecap="round" />
<line x1="434.4" y1="89.6" x2="433.6" y2="151.3" stroke="#000" stroke-width="2.7" stroke-linecap="round" />
<line x1="439.4" y1="90.5" x2="438.8" y2="151.2" stroke="#5e2e02" stroke-width="1.6" stroke-linecap="round" />
<line x1="441.0" y1="89.5" x2="440.2" y2="152.2" stroke="#000" stroke-width="2.7" stroke-linecap="round" />
<line x1="445.9" y1="90.4" x2="445.3" y2="152.1" stroke="#5e2e02" stroke-width="1.6" stroke-linecap="round" />
<line x1="447.5" y1="89.4" x2="446.7" y2="153.1" stroke="#000" stroke-width="2.7" stroke-linecap="round" />
<line x1="453.4" y1="90.3" x2="452.8" y2="153.1" stroke="#5e2e02" stroke-width="1.6" stroke-linecap="round" />
<line x1="455.0" y1="89.3" x2="454.2" y2="154.1" stroke="#000" stroke-width="2.7" stroke-linecap="round" />
<line x1="460.9" y1="90.2" x2="460.3" y2="154.1" stroke="#5e2e02" stroke-width="1.6" stroke-linecap="round" />
<line x1="462.5" y1="89.2" x2="461.7" y2="155.1" stroke="#000" stroke-width="2.7" stroke-linecap="round" />
<line x1="469.4" y1="90.1" x2="468.8" y2="155.3" stroke="#5e2e02" stroke-width="1.6" stroke-linecap="round" />
<line x1="471.0" y1="89.1" x2="470.2" y2="156.3" stroke="#000" stroke-width="2.7" stroke-linecap="round" />
<line x1="476.9" y1="90.0" x2="476.3" y2="156.3" stroke="#5e2e02" stroke-width="1.6" stroke-linecap="round" />
<line x1="478.5" y1="89.0" x2="477.7" y2="157.3" stroke="#000" stroke-width="2.7" stroke-linecap="round" />
<line x1="485.4" y1="89.9" x2="484.8" y2="157.5" stroke="#5e2e02" stroke-width="1.6" stroke-linecap="round" />
<line x1="487.0" y1="88.9" x2="486.2" y2="158.5" stroke="#000" stroke-width="2.7" stroke-linecap="round" />
<line x1="494.7" y1="89.8" x2="494.1" y2="158.7" stroke="#5e2e02" stroke-width="1.6" stroke-linecap="round" />
<line x1="496.3" y1="88.8" x2="495.5" y2="159.7" stroke="#000" stroke-width="2.7" stroke-linecap="round" />
<line x1="503.2" y1="89.7" x2="502.6" y2="159.9" stroke="#5e2e02" stroke-width="1.6" stroke-linecap="round" />
<line x1="504.8" y1="88.7" x2="504.0" y2="160.9" stroke="#000" stroke-width="2.7" stroke-linecap="round" />
<line x1="513.4" y1="89.5" x2="512.8" y2="161.3" stroke="#5e2e02" stroke-width="1.6" stroke-linecap="round" />
<line x1="515.0" y1="88.5" x2="514.2" y2="162.3" stroke="#000" stroke-width="2.7" stroke-linecap="round" />
<line x1="522.9" y1="89.4" x2="522.3" y2="162.6" stroke="#5e2e02" stroke-width="1.6" stroke-linecap="round" />
<line x1="524.5" y1="88.4" x2="523.7" y2="163.6" stroke="#000" stroke-width="2.7" stroke-linecap="round" />
<line x1="534.1" y1="89.3" x2="533.5" y2="164.1" stroke="#5e2e02" stroke-width="1.6" stroke-linecap="round" />
<line x1="535.7" y1="88.3" x2="534.9" y2="165.1" stroke="#000" stroke-width="2.7" stroke-linecap="round" />
<line x1="545.4" y1="89.1" x2="544.8" y2="165.6" stroke="#5e2e02" stroke-width="1.6" stroke-linecap="round" />
<line x1="547.0" y1="88.1" x2="546.2" y2="166.6" stroke="#000" stroke-width="2.7" stroke-linecap="round" />
<path d="M359.7,184.6 Q404.7,185.1 454.7,189.6" fill="none" stroke="#000" stroke-width="3.0" stroke-linecap="round" stroke-linejoin="round" />
<ellipse cx="362.2" cy="184.6" rx="3.8" ry="2.4" fill="#000"/>
<path d="M374.7,189.0 Q419.7,189.5 469.7,194.0" fill="none" stroke="#000" stroke-width="3.0" stroke-linecap="round" stroke-linejoin="round" />
<ellipse cx="377.2" cy="189.0" rx="3.8" ry="2.4" fill="#000"/>
<path d="M392.5,194.0 Q437.5,194.5 487.5,199.0" fill="none" stroke="#000" stroke-width="3.0" stroke-linecap="round" stroke-linejoin="round" />
<ellipse cx="395.0" cy="194.0" rx="3.8" ry="2.4" fill="#000"/>
<path d="M411.0,199.6 Q456.0,200.1 506.0,204.6" fill="none" stroke="#000" stroke-width="3.0" stroke-linecap="round" stroke-linejoin="round" />
<ellipse cx="413.5" cy="199.6" rx="3.8" ry="2.4" fill="#000"/>
<path d="M432.0,204.7 Q477.0,205.2 527.0,209.7" fill="none" stroke="#000" stroke-width="3.0" stroke-linecap="round" stroke-linejoin="round" />
<ellipse cx="434.5" cy="204.7" rx="3.8" ry="2.4" fill="#000"/>
<polygon points="403.0,146.0 557.0,167.0 628.0,229.0 650.0,238.0 555.0,227.0 520.0,219.0 450.0,203.0" fill="#885010" stroke="#000" stroke-width="2.4" stroke-linejoin="round" />
<line x1="402.5" y1="146.9" x2="449.4" y2="202.9" stroke="#000" stroke-width="2.5" stroke-linecap="round" />
<line x1="408.0" y1="147.7" x2="455.8" y2="204.3" stroke="#000" stroke-width="2.5" stroke-linecap="round" />
<line x1="414.7" y1="148.6" x2="463.5" y2="206.1" stroke="#000" stroke-width="2.5" stroke-linecap="round" />
<line x1="420.3" y1="149.4" x2="470.0" y2="207.6" stroke="#000" stroke-width="2.5" stroke-linecap="round" />
<line x1="427.0" y1="150.3" x2="477.7" y2="209.3" stroke="#000" stroke-width="2.5" stroke-linecap="round" />
<line x1="434.4" y1="151.3" x2="486.3" y2="211.3" stroke="#000" stroke-width="2.5" stroke-linecap="round" />
<line x1="441.0" y1="152.2" x2="493.9" y2="213.0" stroke="#000" stroke-width="2.5" stroke-linecap="round" />
<line x1="447.5" y1="153.1" x2="501.4" y2="214.8" stroke="#000" stroke-width="2.5" stroke-linecap="round" />
<line x1="455.0" y1="154.1" x2="510.1" y2="216.7" stroke="#000" stroke-width="2.5" stroke-linecap="round" />
<line x1="462.5" y1="155.1" x2="518.8" y2="218.7" stroke="#000" stroke-width="2.5" stroke-linecap="round" />
<line x1="471.0" y1="156.3" x2="528.6" y2="221.0" stroke="#000" stroke-width="2.5" stroke-linecap="round" />
<line x1="478.5" y1="157.3" x2="537.3" y2="222.9" stroke="#000" stroke-width="2.5" stroke-linecap="round" />
<line x1="487.0" y1="158.5" x2="547.1" y2="225.2" stroke="#000" stroke-width="2.5" stroke-linecap="round" />
<line x1="496.3" y1="159.7" x2="557.8" y2="227.3" stroke="#000" stroke-width="2.5" stroke-linecap="round" />
<line x1="504.8" y1="160.9" x2="567.7" y2="228.5" stroke="#000" stroke-width="2.5" stroke-linecap="round" />
<line x1="515.0" y1="162.3" x2="579.5" y2="229.8" stroke="#000" stroke-width="2.5" stroke-linecap="round" />
<line x1="524.5" y1="163.6" x2="590.4" y2="231.1" stroke="#000" stroke-width="2.5" stroke-linecap="round" />
<line x1="535.7" y1="165.1" x2="603.4" y2="232.6" stroke="#000" stroke-width="2.5" stroke-linecap="round" />
<line x1="547.0" y1="166.6" x2="616.4" y2="234.2" stroke="#000" stroke-width="2.5" stroke-linecap="round" />
<line x1="557.3" y1="168.0" x2="628.0" y2="235.5" stroke="#000" stroke-width="2.5" stroke-linecap="round" />
<line x1="424.1" y1="171.7" x2="589.0" y2="196.2" stroke="#000" stroke-width="1.6" stroke-linecap="round" />
<line x1="440.6" y1="191.6" x2="613.8" y2="219.0" stroke="#000" stroke-width="1.4" stroke-linecap="round" />
<polygon points="450.0,203.0 520.0,219.0 555.0,227.0 650.0,238.0 642.5,269.7 632.5,260.0 520.0,236.0 441.0,221.0" fill="#e07c14" stroke="#000" stroke-width="2.4" stroke-linejoin="round" />
<line x1="457.0" y1="204.6" x2="448.0" y2="222.3" stroke="#000" stroke-width="2.6" stroke-linecap="round" />
<line x1="464.2" y1="206.2" x2="455.3" y2="223.7" stroke="#000" stroke-width="2.6" stroke-linecap="round" />
<line x1="471.6" y1="207.9" x2="462.8" y2="225.1" stroke="#000" stroke-width="2.6" stroke-linecap="round" />
<line x1="479.2" y1="209.7" x2="470.4" y2="226.6" stroke="#000" stroke-width="2.6" stroke-linecap="round" />
<line x1="487.1" y1="211.5" x2="478.4" y2="228.1" stroke="#000" stroke-width="2.6" stroke-linecap="round" />
<line x1="495.2" y1="213.3" x2="486.5" y2="229.6" stroke="#000" stroke-width="2.6" stroke-linecap="round" />
<line x1="503.5" y1="215.2" x2="494.9" y2="231.2" stroke="#000" stroke-width="2.6" stroke-linecap="round" />
<line x1="512.1" y1="217.2" x2="503.6" y2="232.9" stroke="#000" stroke-width="2.6" stroke-linecap="round" />
<line x1="520.9" y1="219.2" x2="512.5" y2="234.6" stroke="#000" stroke-width="2.6" stroke-linecap="round" />
<line x1="530.0" y1="221.3" x2="521.6" y2="236.3" stroke="#000" stroke-width="2.6" stroke-linecap="round" />
<line x1="539.4" y1="223.4" x2="531.1" y2="238.4" stroke="#000" stroke-width="2.6" stroke-linecap="round" />
<line x1="549.1" y1="225.6" x2="540.8" y2="240.4" stroke="#000" stroke-width="2.6" stroke-linecap="round" />
<line x1="559.0" y1="227.5" x2="550.8" y2="242.6" stroke="#000" stroke-width="2.6" stroke-linecap="round" />
<line x1="569.2" y1="228.6" x2="561.1" y2="244.8" stroke="#000" stroke-width="2.6" stroke-linecap="round" />
<line x1="579.8" y1="229.9" x2="571.8" y2="247.0" stroke="#000" stroke-width="2.6" stroke-linecap="round" />
<line x1="590.7" y1="231.1" x2="582.7" y2="249.4" stroke="#000" stroke-width="2.6" stroke-linecap="round" />
<line x1="601.8" y1="232.4" x2="594.0" y2="251.8" stroke="#000" stroke-width="2.6" stroke-linecap="round" />
<line x1="613.3" y1="233.8" x2="605.6" y2="254.3" stroke="#000" stroke-width="2.6" stroke-linecap="round" />
<line x1="625.2" y1="235.1" x2="617.5" y2="256.8" stroke="#000" stroke-width="2.6" stroke-linecap="round" />
<line x1="637.4" y1="236.5" x2="629.8" y2="259.4" stroke="#000" stroke-width="2.6" stroke-linecap="round" />
<polygon points="441.0,221.0 520.0,236.0 632.5,260.0 642.5,269.7 608.0,372.0 596.0,367.5 421.0,282.0" fill="#c8a234" stroke="#000" stroke-width="2.6" stroke-linejoin="round" />
<line x1="448.0" y1="222.3" x2="427.5" y2="285.1" stroke="#000" stroke-width="2.6" stroke-linecap="round" />
<line x1="455.3" y1="223.7" x2="434.3" y2="288.4" stroke="#000" stroke-width="2.6" stroke-linecap="round" />
<line x1="462.8" y1="225.1" x2="441.2" y2="291.7" stroke="#000" stroke-width="2.6" stroke-linecap="round" />
<line x1="470.4" y1="226.6" x2="448.3" y2="295.2" stroke="#000" stroke-width="2.6" stroke-linecap="round" />
<line x1="478.4" y1="228.1" x2="455.7" y2="298.7" stroke="#000" stroke-width="2.6" stroke-linecap="round" />
<line x1="486.5" y1="229.6" x2="463.2" y2="302.3" stroke="#000" stroke-width="2.6" stroke-linecap="round" />
<line x1="494.9" y1="231.2" x2="471.0" y2="306.1" stroke="#000" stroke-width="2.6" stroke-linecap="round" />
<line x1="503.6" y1="232.9" x2="479.1" y2="309.9" stroke="#000" stroke-width="2.6" stroke-linecap="round" />
<line x1="512.5" y1="234.6" x2="487.3" y2="313.9" stroke="#000" stroke-width="2.6" stroke-linecap="round" />
<line x1="521.6" y1="236.3" x2="495.8" y2="318.0" stroke="#000" stroke-width="2.6" stroke-linecap="round" />
<line x1="531.1" y1="238.4" x2="504.6" y2="322.2" stroke="#000" stroke-width="2.6" stroke-linecap="round" />
<line x1="540.8" y1="240.4" x2="513.6" y2="326.6" stroke="#000" stroke-width="2.6" stroke-linecap="round" />
<line x1="550.8" y1="242.6" x2="522.9" y2="331.1" stroke="#000" stroke-width="2.6" stroke-linecap="round" />
<line x1="561.1" y1="244.8" x2="532.5" y2="335.7" stroke="#000" stroke-width="2.6" stroke-linecap="round" />
<line x1="571.8" y1="247.0" x2="542.4" y2="340.4" stroke="#000" stroke-width="2.6" stroke-linecap="round" />
<line x1="582.7" y1="249.4" x2="552.5" y2="345.3" stroke="#000" stroke-width="2.6" stroke-linecap="round" />
<line x1="594.0" y1="251.8" x2="563.0" y2="350.3" stroke="#000" stroke-width="2.6" stroke-linecap="round" />
<line x1="605.6" y1="254.3" x2="573.7" y2="355.5" stroke="#000" stroke-width="2.6" stroke-linecap="round" />
<line x1="617.5" y1="256.8" x2="584.8" y2="360.8" stroke="#000" stroke-width="2.6" stroke-linecap="round" />
<line x1="629.8" y1="259.4" x2="596.2" y2="366.3" stroke="#000" stroke-width="2.6" stroke-linecap="round" />
<polygon points="421.0,282.0 596.0,367.5 606.0,375.0 574.0,472.0 400.0,348.0" fill="#d07010" stroke="#000" stroke-width="2.6" stroke-linejoin="round" />
<line x1="427.5" y1="285.2" x2="406.1" y2="352.3" stroke="#000" stroke-width="2.7" stroke-linecap="round" />
<line x1="434.1" y1="288.6" x2="412.3" y2="356.8" stroke="#000" stroke-width="2.7" stroke-linecap="round" />
<line x1="441.0" y1="292.0" x2="418.8" y2="361.4" stroke="#000" stroke-width="2.7" stroke-linecap="round" />
<line x1="448.0" y1="295.6" x2="425.4" y2="366.1" stroke="#000" stroke-width="2.7" stroke-linecap="round" />
<line x1="455.3" y1="299.2" x2="432.3" y2="371.0" stroke="#000" stroke-width="2.7" stroke-linecap="round" />
<line x1="462.8" y1="303.0" x2="439.3" y2="376.0" stroke="#000" stroke-width="2.7" stroke-linecap="round" />
<line x1="470.5" y1="306.9" x2="446.6" y2="381.2" stroke="#000" stroke-width="2.7" stroke-linecap="round" />
<line x1="478.4" y1="310.9" x2="454.0" y2="386.5" stroke="#000" stroke-width="2.7" stroke-linecap="round" />
<line x1="486.6" y1="315.0" x2="461.7" y2="392.0" stroke="#000" stroke-width="2.7" stroke-linecap="round" />
<line x1="495.0" y1="319.2" x2="469.6" y2="397.6" stroke="#000" stroke-width="2.7" stroke-linecap="round" />
<line x1="503.7" y1="323.6" x2="477.8" y2="403.4" stroke="#000" stroke-width="2.7" stroke-linecap="round" />
<line x1="512.6" y1="328.1" x2="486.2" y2="409.4" stroke="#000" stroke-width="2.7" stroke-linecap="round" />
<line x1="521.8" y1="332.7" x2="494.8" y2="415.6" stroke="#000" stroke-width="2.7" stroke-linecap="round" />
<line x1="531.3" y1="337.5" x2="503.7" y2="421.9" stroke="#000" stroke-width="2.7" stroke-linecap="round" />
<line x1="541.1" y1="342.4" x2="512.9" y2="428.5" stroke="#000" stroke-width="2.7" stroke-linecap="round" />
<line x1="551.1" y1="347.4" x2="522.4" y2="435.2" stroke="#000" stroke-width="2.7" stroke-linecap="round" />
<line x1="561.4" y1="352.6" x2="532.1" y2="442.1" stroke="#000" stroke-width="2.7" stroke-linecap="round" />
<line x1="572.1" y1="358.0" x2="542.1" y2="449.3" stroke="#000" stroke-width="2.7" stroke-linecap="round" />
<line x1="583.1" y1="363.5" x2="552.4" y2="456.6" stroke="#000" stroke-width="2.7" stroke-linecap="round" />
<line x1="594.4" y1="369.2" x2="563.1" y2="464.2" stroke="#000" stroke-width="2.7" stroke-linecap="round" />
<polygon points="400.0,348.0 574.0,472.0 574.0,479.0 400.0,355.0" fill="#a05808" stroke="#000" stroke-width="2" stroke-linejoin="round" />
<polygon points="642.5,269.7 686.6,284.7 652.0,387.0 607.8,370.0" fill="#ffe33a" stroke="#000" stroke-width="2.8" stroke-linejoin="round" />
<polygon points="607.0,370.5 652.5,387.0 626.0,473.6 574.0,478.5 574.0,472.0 606.0,375.0" fill="#ff9008" stroke="#000" stroke-width="2.6" stroke-linejoin="round" />
<line x1="688.0" y1="285.0" x2="655.0" y2="387.0" stroke="#c87010" stroke-width="1.6" stroke-linecap="round" />
<clipPath id="cw"><polygon points="705.0,233.0 779.0,230.5 779.0,226.6 825.0,228.5 811.0,505.0 765.0,512.0 763.0,614.0 573.5,647.5 574.0,479.0 626.0,473.6"/></clipPath>
<polygon points="705.0,233.0 779.0,230.5 779.0,226.6 825.0,228.5 811.0,505.0 765.0,512.0 763.0,614.0 573.5,647.5 574.0,479.0 626.0,473.6" fill="#ffe33a" stroke="#000" stroke-width="3" stroke-linejoin="round" />
<g clip-path="url(#cw)">
<polygon points="690.0,233.7 700.0,233.3 777.5,230.6 777.5,258.9 697.0,263.0 690.0,263.4" fill="#ff9008" stroke="none" stroke-width="0" stroke-linejoin="round" />
<polygon points="680.0,263.9 697.0,263.0 728.5,261.4 728.5,290.1 689.5,292.0 680.0,292.5" fill="#ff9008" stroke="none" stroke-width="0" stroke-linejoin="round" />
<polygon points="670.0,292.9 689.5,292.0 821.0,285.7 830.0,285.3 830.0,313.2 819.0,313.8 680.0,322.0 670.0,322.6" fill="#ff9008" stroke="none" stroke-width="0" stroke-linejoin="round" />
<polygon points="660.0,323.2 680.0,322.0 727.5,319.2 727.5,348.3 670.7,352.0 660.0,352.7" fill="#ff9008" stroke="none" stroke-width="0" stroke-linejoin="round" />
<polygon points="650.0,353.3 670.7,352.0 677.0,351.6 677.0,381.4 658.0,383.0 650.0,383.7" fill="#ff9008" stroke="none" stroke-width="0" stroke-linejoin="round" />
<polygon points="772.5,345.4 817.5,342.5 830.0,341.7 830.0,368.9 816.7,370.0 772.5,373.6" fill="#ff9008" stroke="none" stroke-width="0" stroke-linejoin="round" />
<polygon points="640.0,384.5 658.0,383.0 725.0,377.5 725.0,406.6 646.0,415.0 640.0,415.6" fill="#ff9008" stroke="none" stroke-width="0" stroke-linejoin="round" />
<polygon points="630.0,416.7 646.0,415.0 675.5,411.9 675.5,439.7 636.6,444.0 630.0,444.7" fill="#ff9008" stroke="none" stroke-width="0" stroke-linejoin="round" />
<polygon points="770.0,401.9 815.8,397.0 830.0,395.5 830.0,422.6 814.0,424.4 770.0,429.3" fill="#ff9008" stroke="none" stroke-width="0" stroke-linejoin="round" />
<polygon points="620.0,445.8 636.6,444.0 723.4,434.4 723.4,462.1 626.0,473.6 620.0,474.2" fill="#ff9008" stroke="none" stroke-width="0" stroke-linejoin="round" />
<polygon points="768.0,456.9 813.0,451.6 830.0,449.6 830.0,476.6 812.0,478.8 768.0,484.3" fill="#ff9008" stroke="none" stroke-width="0" stroke-linejoin="round" />
<polygon points="719.5,543.7 764.5,537.5 790.0,534.0 790.0,559.7 762.6,563.8 719.5,570.2" fill="#ff9008" stroke="none" stroke-width="0" stroke-linejoin="round" />
<polygon points="716.0,597.3 761.7,590.0 790.0,585.5 790.0,609.3 763.0,614.0 716.0,622.2" fill="#ff9008" stroke="none" stroke-width="0" stroke-linejoin="round" />
<path d="M689.0,263.4 L697.0,263.0 L822.0,256.6" fill="none" stroke="#000" stroke-width="2.6" stroke-linecap="round" stroke-linejoin="round" />
<path d="M681.5,292.4 L689.5,292.0 L821.0,285.7" fill="none" stroke="#000" stroke-width="2.6" stroke-linecap="round" stroke-linejoin="round" />
<path d="M672.0,322.5 L680.0,322.0 L819.0,313.8" fill="none" stroke="#000" stroke-width="2.6" stroke-linecap="round" stroke-linejoin="round" />
<path d="M662.7,352.5 L670.7,352.0 L817.5,342.5" fill="none" stroke="#000" stroke-width="2.6" stroke-linecap="round" stroke-linejoin="round" />
<path d="M650.0,383.7 L658.0,383.0 L816.7,370.0" fill="none" stroke="#000" stroke-width="2.6" stroke-linecap="round" stroke-linejoin="round" />
<path d="M638.0,415.8 L646.0,415.0 L815.8,397.0" fill="none" stroke="#000" stroke-width="2.6" stroke-linecap="round" stroke-linejoin="round" />
<path d="M628.6,444.9 L636.6,444.0 L814.0,424.4" fill="none" stroke="#000" stroke-width="2.6" stroke-linecap="round" stroke-linejoin="round" />
<path d="M566.0,479.8 L574.0,479.0 L626.0,473.6 L813.0,451.6" fill="none" stroke="#000" stroke-width="2.6" stroke-linecap="round" stroke-linejoin="round" />
<path d="M566.0,509.5 L574.0,508.5 L812.0,478.8" fill="none" stroke="#000" stroke-width="2.6" stroke-linecap="round" stroke-linejoin="round" />
<path d="M566.0,536.7 L574.0,535.7 L765.0,512.0 L811.0,504.5" fill="none" stroke="#000" stroke-width="2.6" stroke-linecap="round" stroke-linejoin="round" />
<path d="M566.0,564.9 L574.0,563.8 L764.5,537.5" fill="none" stroke="#000" stroke-width="2.6" stroke-linecap="round" stroke-linejoin="round" />
<path d="M566.0,593.2 L574.0,592.0 L762.6,563.8" fill="none" stroke="#000" stroke-width="2.6" stroke-linecap="round" stroke-linejoin="round" />
<path d="M566.0,621.3 L574.0,620.0 L761.7,590.0" fill="none" stroke="#000" stroke-width="2.6" stroke-linecap="round" stroke-linejoin="round" />
<line x1="777.8" y1="230.6" x2="777.2" y2="258.9" stroke="#000" stroke-width="2.6" stroke-linecap="round" />
<line x1="728.8" y1="261.4" x2="728.2" y2="290.1" stroke="#000" stroke-width="2.6" stroke-linecap="round" />
<line x1="775.8" y1="287.9" x2="775.2" y2="316.4" stroke="#000" stroke-width="2.6" stroke-linecap="round" />
<line x1="727.8" y1="319.2" x2="727.2" y2="348.3" stroke="#000" stroke-width="2.6" stroke-linecap="round" />
<line x1="677.3" y1="351.6" x2="676.7" y2="381.4" stroke="#000" stroke-width="2.6" stroke-linecap="round" />
<line x1="772.8" y1="345.4" x2="772.2" y2="373.6" stroke="#000" stroke-width="2.6" stroke-linecap="round" />
<line x1="725.3" y1="377.5" x2="724.7" y2="406.6" stroke="#000" stroke-width="2.6" stroke-linecap="round" />
<line x1="675.8" y1="411.9" x2="675.2" y2="439.7" stroke="#000" stroke-width="2.6" stroke-linecap="round" />
<line x1="770.3" y1="401.9" x2="769.7" y2="429.3" stroke="#000" stroke-width="2.6" stroke-linecap="round" />
<line x1="723.7" y1="434.4" x2="723.1" y2="462.1" stroke="#000" stroke-width="2.6" stroke-linecap="round" />
<line x1="674.3" y1="468.0" x2="673.7" y2="496.0" stroke="#000" stroke-width="2.6" stroke-linecap="round" />
<line x1="768.3" y1="456.9" x2="767.7" y2="484.3" stroke="#000" stroke-width="2.6" stroke-linecap="round" />
<line x1="625.0" y1="502.2" x2="624.4" y2="529.4" stroke="#000" stroke-width="2.6" stroke-linecap="round" />
<line x1="721.3" y1="490.2" x2="720.7" y2="517.5" stroke="#000" stroke-width="2.6" stroke-linecap="round" />
<line x1="672.9" y1="523.5" x2="672.3" y2="550.2" stroke="#000" stroke-width="2.6" stroke-linecap="round" />
<line x1="625.0" y1="556.8" x2="624.4" y2="584.4" stroke="#000" stroke-width="2.6" stroke-linecap="round" />
<line x1="719.8" y1="543.7" x2="719.2" y2="570.2" stroke="#000" stroke-width="2.6" stroke-linecap="round" />
<line x1="671.9" y1="577.4" x2="671.3" y2="604.4" stroke="#000" stroke-width="2.6" stroke-linecap="round" />
<line x1="622.8" y1="612.2" x2="622.2" y2="638.5" stroke="#000" stroke-width="2.6" stroke-linecap="round" />
<line x1="716.3" y1="597.3" x2="715.7" y2="622.2" stroke="#000" stroke-width="2.6" stroke-linecap="round" />
</g>
<polygon points="705.0,233.0 779.0,230.5 779.0,226.6 825.0,228.5 811.0,505.0 765.0,512.0 763.0,614.0 573.5,647.5 574.0,479.0 626.0,473.6" fill="none" stroke="#000" stroke-width="3" stroke-linejoin="round" />
<line x1="705.0" y1="233.0" x2="626.0" y2="473.6" stroke="#000" stroke-width="2.4" stroke-linecap="round" />
<polygon points="779.0,225.0 791.0,223.5 825.0,228.5 779.0,227.5" fill="#907820" stroke="#000" stroke-width="1.5" stroke-linejoin="round" />
<polygon points="764.5,564.0 778.6,566.0 778.6,588.0 764.5,590.0" fill="#ffe33a" stroke="#000" stroke-width="2.2" stroke-linejoin="round" />
<polygon points="764.5,558.0 771.0,557.0 778.6,565.5 764.5,564.0" fill="#907820" stroke="#000" stroke-width="1.5" stroke-linejoin="round" />
<line x1="766.0" y1="552.5" x2="778.0" y2="550.8" stroke="#222" stroke-width="3" stroke-linecap="round" />
<line x1="772.0" y1="548.0" x2="776.0" y2="553.0" stroke="#333" stroke-width="2" stroke-linecap="round" />
<clipPath id="cl"><polygon points="400.0,354.5 574.0,479.0 574.0,647.0 402.5,469.0"/></clipPath>
<polygon points="400.0,354.5 574.0,479.0 574.0,647.0 402.5,469.0" fill="#c8a234" stroke="#000" stroke-width="3" stroke-linejoin="round" />
<g clip-path="url(#cl)">
<line x1="574.0" y1="508.5" x2="395.0" y2="370.3" stroke="#000" stroke-width="2.6" stroke-linecap="round" />
<line x1="574.0" y1="535.7" x2="395.0" y2="388.1" stroke="#000" stroke-width="2.6" stroke-linecap="round" />
<line x1="574.0" y1="563.8" x2="395.0" y2="406.6" stroke="#000" stroke-width="2.6" stroke-linecap="round" />
<line x1="574.0" y1="592.0" x2="395.0" y2="425.0" stroke="#000" stroke-width="2.6" stroke-linecap="round" />
<line x1="574.0" y1="620.0" x2="395.0" y2="443.4" stroke="#000" stroke-width="2.6" stroke-linecap="round" />
<line x1="553.2" y1="464.1" x2="553.2" y2="492.4" stroke="#000" stroke-width="2.6" stroke-linecap="round" />
<line x1="516.1" y1="437.6" x2="516.1" y2="463.8" stroke="#000" stroke-width="2.6" stroke-linecap="round" />
<line x1="484.2" y1="414.8" x2="484.2" y2="439.2" stroke="#000" stroke-width="2.6" stroke-linecap="round" />
<line x1="456.4" y1="394.9" x2="456.4" y2="417.7" stroke="#000" stroke-width="2.6" stroke-linecap="round" />
<line x1="432.0" y1="377.4" x2="432.0" y2="398.8" stroke="#000" stroke-width="2.6" stroke-linecap="round" />
<line x1="410.3" y1="361.9" x2="410.3" y2="382.1" stroke="#000" stroke-width="2.6" stroke-linecap="round" />
<line x1="533.9" y1="477.6" x2="533.9" y2="502.7" stroke="#000" stroke-width="2.6" stroke-linecap="round" />
<line x1="499.6" y1="451.0" x2="499.6" y2="474.4" stroke="#000" stroke-width="2.6" stroke-linecap="round" />
<line x1="469.8" y1="428.1" x2="469.8" y2="449.8" stroke="#000" stroke-width="2.6" stroke-linecap="round" />
<line x1="443.8" y1="408.0" x2="443.8" y2="428.4" stroke="#000" stroke-width="2.6" stroke-linecap="round" />
<line x1="420.8" y1="390.2" x2="420.8" y2="409.4" stroke="#000" stroke-width="2.6" stroke-linecap="round" />
<line x1="400.4" y1="374.5" x2="400.4" y2="392.6" stroke="#000" stroke-width="2.6" stroke-linecap="round" />
<line x1="553.2" y1="518.5" x2="553.2" y2="545.5" stroke="#000" stroke-width="2.6" stroke-linecap="round" />
<line x1="516.1" y1="488.0" x2="516.1" y2="513.0" stroke="#000" stroke-width="2.6" stroke-linecap="round" />
<line x1="484.2" y1="461.7" x2="484.2" y2="484.9" stroke="#000" stroke-width="2.6" stroke-linecap="round" />
<line x1="456.4" y1="438.7" x2="456.4" y2="460.5" stroke="#000" stroke-width="2.6" stroke-linecap="round" />
<line x1="432.0" y1="418.6" x2="432.0" y2="439.0" stroke="#000" stroke-width="2.6" stroke-linecap="round" />
<line x1="410.3" y1="400.8" x2="410.3" y2="420.0" stroke="#000" stroke-width="2.6" stroke-linecap="round" />
<line x1="533.9" y1="528.6" x2="533.9" y2="554.6" stroke="#000" stroke-width="2.6" stroke-linecap="round" />
<line x1="499.6" y1="498.4" x2="499.6" y2="522.6" stroke="#000" stroke-width="2.6" stroke-linecap="round" />
<line x1="469.8" y1="472.3" x2="469.8" y2="494.8" stroke="#000" stroke-width="2.6" stroke-linecap="round" />
<line x1="443.8" y1="449.4" x2="443.8" y2="470.6" stroke="#000" stroke-width="2.6" stroke-linecap="round" />
<line x1="420.8" y1="429.3" x2="420.8" y2="449.2" stroke="#000" stroke-width="2.6" stroke-linecap="round" />
<line x1="400.4" y1="411.3" x2="400.4" y2="430.1" stroke="#000" stroke-width="2.6" stroke-linecap="round" />
<line x1="553.2" y1="572.6" x2="553.2" y2="599.4" stroke="#000" stroke-width="2.6" stroke-linecap="round" />
<line x1="516.1" y1="538.0" x2="516.1" y2="562.9" stroke="#000" stroke-width="2.6" stroke-linecap="round" />
<line x1="484.2" y1="508.2" x2="484.2" y2="531.4" stroke="#000" stroke-width="2.6" stroke-linecap="round" />
<line x1="456.4" y1="482.3" x2="456.4" y2="504.0" stroke="#000" stroke-width="2.6" stroke-linecap="round" />
<line x1="432.0" y1="459.5" x2="432.0" y2="479.9" stroke="#000" stroke-width="2.6" stroke-linecap="round" />
<line x1="410.3" y1="439.4" x2="410.3" y2="458.6" stroke="#000" stroke-width="2.6" stroke-linecap="round" />
<line x1="533.9" y1="580.5" x2="533.9" y2="605.4" stroke="#000" stroke-width="2.6" stroke-linecap="round" />
<line x1="499.6" y1="546.6" x2="499.6" y2="569.7" stroke="#000" stroke-width="2.6" stroke-linecap="round" />
<line x1="469.8" y1="517.2" x2="469.8" y2="538.8" stroke="#000" stroke-width="2.6" stroke-linecap="round" />
<line x1="443.8" y1="491.6" x2="443.8" y2="511.8" stroke="#000" stroke-width="2.6" stroke-linecap="round" />
<line x1="420.8" y1="468.9" x2="420.8" y2="488.0" stroke="#000" stroke-width="2.6" stroke-linecap="round" />
<line x1="400.4" y1="448.8" x2="400.4" y2="466.8" stroke="#000" stroke-width="2.6" stroke-linecap="round" />
</g>
<polygon points="400.0,354.5 574.0,479.0 574.0,647.0 402.5,469.0" fill="none" stroke="#000" stroke-width="3" stroke-linejoin="round" />
<line x1="574.0" y1="479.0" x2="573.5" y2="647.5" stroke="#000" stroke-width="3.2" stroke-linecap="round" />
<line x1="57" y1="545.9" x2="574" y2="480.2" stroke="#dff4c4" stroke-width="1.1" stroke-dasharray="1.2 4.8" opacity="0.9"/>
<path d="M360.6,206.6 Q420.3,207.8 470.0,214.0" fill="none" stroke="#000" stroke-width="3.7" stroke-linecap="round" stroke-linejoin="round" />
<ellipse cx="363.1" cy="206.6" rx="3.6" ry="2.6" fill="#000"/>
<path d="M375.6,211.8 Q438.8,214.4 492.0,222.0" fill="none" stroke="#000" stroke-width="3.7" stroke-linecap="round" stroke-linejoin="round" />
<ellipse cx="378.1" cy="211.8" rx="3.6" ry="2.6" fill="#000"/>
<path d="M393.5,217.5 Q460.2,221.2 517.0,230.0" fill="none" stroke="#000" stroke-width="3.7" stroke-linecap="round" stroke-linejoin="round" />
<ellipse cx="396.0" cy="217.5" rx="3.6" ry="2.6" fill="#000"/>
<path d="M412.0,224.4 Q482.0,229.2 542.0,239.0" fill="none" stroke="#000" stroke-width="3.7" stroke-linecap="round" stroke-linejoin="round" />
<ellipse cx="414.5" cy="224.4" rx="3.6" ry="2.6" fill="#000"/>
<path d="M432.8,232.0 Q504.4,237.0 566.0,247.0" fill="none" stroke="#000" stroke-width="3.7" stroke-linecap="round" stroke-linejoin="round" />
<ellipse cx="435.3" cy="232.0" rx="3.6" ry="2.6" fill="#000"/>
<path d="M458.0,240.0 Q529.5,244.5 591.0,254.0" fill="none" stroke="#000" stroke-width="3.7" stroke-linecap="round" stroke-linejoin="round" />
<ellipse cx="460.5" cy="240.0" rx="3.6" ry="2.6" fill="#000"/>
<path d="M486.0,249.7 Q552.5,251.8 609.0,259.0" fill="none" stroke="#000" stroke-width="3.7" stroke-linecap="round" stroke-linejoin="round" />
<ellipse cx="488.5" cy="249.7" rx="3.6" ry="2.6" fill="#000"/>
<path d="M514.5,260.0 Q574.8,259.5 625.0,264.0" fill="none" stroke="#000" stroke-width="3.7" stroke-linecap="round" stroke-linejoin="round" />
<ellipse cx="517.0" cy="260.0" rx="3.6" ry="2.6" fill="#000"/>
<path d="M363.4,292.5 Q395.0,290.2 420.7,283.0" fill="none" stroke="#000" stroke-width="3.7" stroke-linecap="round" stroke-linejoin="round" />
<ellipse cx="365.9" cy="292.5" rx="3.6" ry="2.6" fill="#000"/>
<path d="M378.5,302.0 Q414.8,300.5 445.0,294.0" fill="none" stroke="#000" stroke-width="3.7" stroke-linecap="round" stroke-linejoin="round" />
<ellipse cx="381.0" cy="302.0" rx="3.6" ry="2.6" fill="#000"/>
<path d="M395.3,312.8 Q427.6,311.7 454.0,305.6" fill="none" stroke="#000" stroke-width="3.7" stroke-linecap="round" stroke-linejoin="round" />
<ellipse cx="397.8" cy="312.8" rx="3.6" ry="2.6" fill="#000"/>
<path d="M415.0,324.4 Q449.9,321.7 478.8,314.0" fill="none" stroke="#000" stroke-width="3.7" stroke-linecap="round" stroke-linejoin="round" />
<ellipse cx="417.5" cy="324.4" rx="3.6" ry="2.6" fill="#000"/>
<path d="M435.7,337.5 Q474.4,334.2 507.0,326.0" fill="none" stroke="#000" stroke-width="3.7" stroke-linecap="round" stroke-linejoin="round" />
<ellipse cx="438.2" cy="337.5" rx="3.6" ry="2.6" fill="#000"/>
<path d="M458.0,351.6 Q496.8,347.6 529.5,338.5" fill="none" stroke="#000" stroke-width="3.7" stroke-linecap="round" stroke-linejoin="round" />
<ellipse cx="460.5" cy="351.6" rx="3.6" ry="2.6" fill="#000"/>
<path d="M484.5,367.5 Q527.8,363.4 565.0,354.4" fill="none" stroke="#000" stroke-width="3.7" stroke-linecap="round" stroke-linejoin="round" />
<ellipse cx="487.0" cy="367.5" rx="3.6" ry="2.6" fill="#000"/>
<path d="M514.5,387.0 Q558.2,381.5 596.0,371.0" fill="none" stroke="#000" stroke-width="3.7" stroke-linecap="round" stroke-linejoin="round" />
<ellipse cx="517.0" cy="387.0" rx="3.6" ry="2.6" fill="#000"/>
<line x1="632.0" y1="44.0" x2="622.0" y2="699.0" stroke="#8a86e0" stroke-width="1.2" stroke-linecap="round" />
<line x1="714.5" y1="44" x2="712.2" y2="121" stroke="#000" stroke-width="1.2" stroke-dasharray="6 5"/>
<line x1="712.2" y1="121" x2="697.3" y2="627" stroke="#1a0c00" stroke-width="1.2" stroke-dasharray="6 5" opacity="0.6"/>
<line x1="697.3" y1="627" x2="695.2" y2="699" stroke="#000" stroke-width="1.2" stroke-dasharray="6 5"/>
<line x1="568.3" y1="44" x2="565.2" y2="699" stroke="#000" stroke-width="1" stroke-dasharray="1 3.2" opacity="0.75"/>
<line x1="626.0" y1="473.6" x2="780.0" y2="574.1" stroke="#e8907a" stroke-width="1.1" stroke-linecap="round" />
<circle cx="625.9" cy="473.7" r="5" fill="#7060c8" stroke="#fff" stroke-width="1"/>
<path d="M697.5,459 L707,468.5 M707,459 L697.5,468.5" stroke="#fff" stroke-width="3" fill="none"/><path d="M698,459.5 L706.5,468 M706.5,459.5 L698,468" stroke="#5048b0" stroke-width="1.2" fill="none"/><circle cx="702.3" cy="463.8" r="2" fill="#5048b0"/>
<rect x="56" y="43" width="974" height="1.8" fill="#5c6e7c"/><rect x="56" y="43" width="1.8" height="656" fill="#6c7880"/><rect x="1029" y="43" width="1" height="656" fill="#fff"/>
</svg>
</div>
<div id="tray">
<div class="a" style="left:0;top:0;width:331px;height:18px;background:linear-gradient(#9db6d6,#bcd3eb)"><span class="a" style="left:4.2px;top:2.8px;font-size:12px;letter-spacing:-0.40px;">Default Tray</span><svg class="a" style="left:296px;top:4px" width="10" height="11" viewBox="0 0 10 11"><path d="M2.5,0.8 h5 v4.5 h-5 z M6.5,0.8 v4.5 M1,5.6 h8 M5,5.6 v4.6" stroke="#000" stroke-width="1.3" fill="none"/></svg><svg class="a" style="left:315px;top:4px" width="12" height="12" viewBox="0 0 12 12"><rect width="12" height="12" fill="#c7494b"/><path d="M3.5,3.5 L8.5,8.5 M8.5,3.5 L3.5,8.5" stroke="#fff" stroke-width="1.7"/></svg></div>
<div class="hd" style="top:19px"><svg class="a" style="left:0;top:0" width="314" height="18" viewBox="0 0 314 18"><path d="M7.5,6 h8 l-4,7z" fill="#000"/><rect x="297.5" y="2.5" width="13" height="13" fill="#ececec" stroke="#9a9a9a"/><path d="M302,7 l4,4 m0,-4 l-4,4" stroke="#000" stroke-width="1.4"/></svg><span class="a" style="left:21.8px;top:1.8px;font-size:12.2px;letter-spacing:-0.09px;">Entity Info</span></div>
<span class="a" style="left:8.1px;top:43.8px;font-size:11.6px;letter-spacing:-0.09px;font-weight:bold;">No Selection</span>
<div class="a" style="left:4px;top:64px;width:309px;height:1px;background:#a0a0a0"></div>
<div class="hd" style="top:216px"><svg class="a" style="left:0;top:0" width="314" height="18" viewBox="0 0 314 18"><path d="M9,5 v8 l6.5,-4z" fill="#000"/><rect x="297.5" y="2.5" width="13" height="13" fill="#ececec" stroke="#9a9a9a"/><path d="M302,7 l4,4 m0,-4 l-4,4" stroke="#000" stroke-width="1.4"/></svg><span class="a" style="left:21.8px;top:1.8px;font-size:12.2px;letter-spacing:-0.27px;">Materials</span></div>
<div class="hd" style="top:235px"><svg class="a" style="left:0;top:0" width="314" height="18" viewBox="0 0 314 18"><path d="M9,5 v8 l6.5,-4z" fill="#000"/><rect x="297.5" y="2.5" width="13" height="13" fill="#ececec" stroke="#9a9a9a"/><path d="M302,7 l4,4 m0,-4 l-4,4" stroke="#000" stroke-width="1.4"/></svg><span class="a" style="left:21.8px;top:1.8px;font-size:12.2px;letter-spacing:-0.08px;">Components</span></div>
<div class="hd" style="top:254px"><svg class="a" style="left:0;top:0" width="314" height="18" viewBox="0 0 314 18"><path d="M9,5 v8 l6.5,-4z" fill="#000"/><rect x="297.5" y="2.5" width="13" height="13" fill="#ececec" stroke="#9a9a9a"/><path d="M302,7 l4,4 m0,-4 l-4,4" stroke="#000" stroke-width="1.4"/></svg><span class="a" style="left:21.8px;top:1.8px;font-size:12.2px;letter-spacing:-0.70px;">Styles</span></div>
<div class="hd" style="top:273px"><svg class="a" style="left:0;top:0" width="314" height="18" viewBox="0 0 314 18"><path d="M7.5,6 h8 l-4,7z" fill="#000"/><rect x="297.5" y="2.5" width="13" height="13" fill="#ececec" stroke="#9a9a9a"/><path d="M302,7 l4,4 m0,-4 l-4,4" stroke="#000" stroke-width="1.4"/></svg><span class="a" style="left:21.8px;top:1.8px;font-size:12.2px;letter-spacing:-1.02px;">Tags</span></div>
<div class="a" style="left:314px;top:18px;width:17px;height:640px;background:#f0f0f0"></div>
<svg class="a" style="left:317px;top:24px" width="12" height="8" viewBox="0 0 12 8"><path d="M1.5,6.5 L6,2 L10.5,6.5" stroke="#404040" stroke-width="1.8" fill="none"/></svg>
<div class="a" style="left:315px;top:37px;width:15px;height:17px;background:#cdcdcd"></div>
<svg class="a" style="left:317px;top:644px" width="12" height="8" viewBox="0 0 12 8"><path d="M1.5,1.5 L6,6 L10.5,1.5" stroke="#404040" stroke-width="1.8" fill="none"/></svg>
<svg class="a" style="left:5px;top:295px" width="310" height="18" viewBox="0 0 310 18"><circle cx="9" cy="9" r="6.6" fill="none" stroke="#000" stroke-width="1.5"/><path d="M5,9 h8 M9,5 v8" stroke="#000" stroke-width="1.8"/><circle cx="33" cy="9" r="6.6" fill="none" stroke="#000" stroke-width="1.5"/><path d="M29,9 h8" stroke="#000" stroke-width="1.8"/><path d="M296,4 h4 v-2.5 l6.5,7.5 l-6.5,7.5 v-2.5 h-4 z" fill="#000"/><rect x="292.5" y="5" width="6.5" height="8.5" fill="#4a78c8" stroke="#e8e8e8" stroke-width="0.6"/><path d="M294,8 h4 M294,10 h4 M294,12 h4" stroke="#fff" stroke-width="0.7"/></svg>
<div class="a" style="left:0;top:317px;width:298px;height:341px;background:#fff"></div>
<div class="a" style="left:298px;top:317px;width:16px;height:341px;background:#f0f0f0"></div>
<div class="a" style="left:23px;top:317px;width:1px;height:24px;background:#e5e5e5"></div>
<div class="a" style="left:151px;top:317px;width:1px;height:24px;background:#e5e5e5"></div>
<div class="a" style="left:174px;top:317px;width:1px;height:24px;background:#e5e5e5"></div>
<div class="a" style="left:269px;top:317px;width:1px;height:24px;background:#e5e5e5"></div>
<div class="a" style="left:293px;top:317px;width:1px;height:24px;background:#e5e5e5"></div>
<span class="a" style="left:29.1px;top:323.5px;font-size:11.2px;letter-spacing:-1.15px;">Name</span><span class="a" style="left:181.5px;top:323.5px;font-size:11.2px;letter-spacing:-0.79px;">Dashes</span>
<svg class="a" style="left:69px;top:323px" width="14" height="14" viewBox="0 0 14 14"><rect width="14" height="14" fill="#f0f0f0"/><path d="M3.5,4 h7 l-3.5,7 z" fill="none" stroke="#a0a0a0" stroke-width="1"/></svg>
<svg class="a" style="left:300px;top:324px" width="12" height="8" viewBox="0 0 12 8"><path d="M2,6.5 L6,2.5 L10,6.5" stroke="#505050" stroke-width="1.8" fill="none"/></svg>
<div class="a" style="left:298.5px;top:336px;width:15px;height:162px;background:#cdcdcd"></div>
<div class="row" style="top:342px"><svg class="a" style="left:3px;top:4px" width="14" height="11" viewBox="0 0 14 11"><path d="M0.8,5.8 Q7,-1.5 13.2,5.8 Q7,11.5 0.8,5.8Z" fill="#fff" stroke="#222" stroke-width="1.2"/><circle cx="7" cy="5.4" r="2.9" fill="#111"/></svg><span class="a" style="left:27.0px;top:4.0px;font-size:11.2px;letter-spacing:-0.25px;">Untagged</span><div class="sw" style="background:#f85858"></div><span class="a" style="left:175.9px;top:4.0px;font-size:11.2px;letter-spacing:-0.01px;">Default</span><svg class="a" style="left:273px;top:2px" width="14" height="14" viewBox="0 0 14 14"><path d="M2,12.5 L3.2,9 L10.5,1.5 L12.5,3.5 L5.2,11 Z" fill="#b04838" stroke="#5a2018" stroke-width="0.6"/><path d="M2,12.5 L3.2,9 L5.2,11Z" fill="#e8c8a0"/></svg></div>
<div class="row" style="top:361px"><svg class="a" style="left:3px;top:4px" width="14" height="11" viewBox="0 0 14 11"><ellipse cx="7" cy="5.5" rx="5.8" ry="3.6" fill="#fff" stroke="#222" stroke-width="1.2"/></svg><span class="a" style="left:27.0px;top:4.0px;font-size:11.2px;letter-spacing:-0.35px;">Армирование камин</span><div class="sw" style="background:#0a9478"></div><span class="a" style="left:175.9px;top:4.0px;font-size:11.2px;letter-spacing:-0.01px;">Default</span></div>
<div class="row" style="top:380px"><div class="a" style="left:26px;top:0;width:271px;height:19px;background:#0078d7"></div><svg class="a" style="left:3px;top:4px" width="14" height="11" viewBox="0 0 14 11"><path d="M0.8,5.8 Q7,-1.5 13.2,5.8 Q7,11.5 0.8,5.8Z" fill="#fff" stroke="#222" stroke-width="1.2"/><circle cx="7" cy="5.4" r="2.9" fill="#111"/></svg><span class="a" style="left:27.0px;top:4.0px;font-size:11.2px;letter-spacing:-0.18px;color:#fff;">Армирование топка</span><div class="sw" style="background:#f89898"></div><span class="a" style="left:175.9px;top:4.0px;font-size:11.2px;letter-spacing:-0.01px;">Default</span></div>
<div class="row" style="top:399px"><svg class="a" style="left:3px;top:4px" width="14" height="11" viewBox="0 0 14 11"><ellipse cx="7" cy="5.5" rx="5.8" ry="3.6" fill="#fff" stroke="#222" stroke-width="1.2"/></svg><span class="a" style="left:27.0px;top:4.0px;font-size:11.2px;letter-spacing:0.21px;">Дверь+задвижка</span><div class="sw" style="background:#9898c8"></div><span class="a" style="left:175.9px;top:4.0px;font-size:11.2px;letter-spacing:-0.01px;">Default</span></div>
<div class="row" style="top:418px"><svg class="a" style="left:3px;top:4px" width="14" height="11" viewBox="0 0 14 11"><ellipse cx="7" cy="5.5" rx="5.8" ry="3.6" fill="#fff" stroke="#222" stroke-width="1.2"/></svg><span class="a" style="left:27.0px;top:4.0px;font-size:11.2px;letter-spacing:-0.14px;">Керамовата</span><div class="sw" style="background:#c85808"></div><span class="a" style="left:175.9px;top:4.0px;font-size:11.2px;letter-spacing:-0.01px;">Default</span></div>
<div class="row" style="top:437px"><svg class="a" style="left:3px;top:4px" width="14" height="11" viewBox="0 0 14 11"><ellipse cx="7" cy="5.5" rx="5.8" ry="3.6" fill="#fff" stroke="#222" stroke-width="1.2"/></svg><span class="a" style="left:27.0px;top:4.0px;font-size:11.2px;letter-spacing:-0.23px;">Ряд 01</span><div class="sw" style="background:#c888c8"></div><span class="a" style="left:175.9px;top:4.0px;font-size:11.2px;letter-spacing:-0.01px;">Default</span></div>
<div class="row" style="top:456px"><svg class="a" style="left:3px;top:4px" width="14" height="11" viewBox="0 0 14 11"><ellipse cx="7" cy="5.5" rx="5.8" ry="3.6" fill="#fff" stroke="#222" stroke-width="1.2"/></svg><span class="a" style="left:27.0px;top:4.0px;font-size:11.2px;letter-spacing:-0.23px;">Ряд 02</span><div class="sw" style="background:#f0f810"></div><span class="a" style="left:175.9px;top:4.0px;font-size:11.2px;letter-spacing:-0.01px;">Default</span></div>
<div class="row" style="top:475px"><svg class="a" style="left:3px;top:4px" width="14" height="11" viewBox="0 0 14 11"><ellipse cx="7" cy="5.5" rx="5.8" ry="3.6" fill="#fff" stroke="#222" stroke-width="1.2"/></svg><span class="a" style="left:27.0px;top:4.0px;font-size:11.2px;letter-spacing:-0.23px;">Ряд 03</span><div class="sw" style="background:#b84808"></div><span class="a" style="left:175.9px;top:4.0px;font-size:11.2px;letter-spacing:-0.01px;">Default</span></div>
<div class="row" style="top:494px"><svg class="a" style="left:3px;top:4px" width="14" height="11" viewBox="0 0 14 11"><ellipse cx="7" cy="5.5" rx="5.8" ry="3.6" fill="#fff" stroke="#222" stroke-width="1.2"/></svg><span class="a" style="left:27.0px;top:4.0px;font-size:11.2px;letter-spacing:-0.23px;">Ряд 04</span><div class="sw" style="background:#f09808"></div><span class="a" style="left:175.9px;top:4.0px;font-size:11.2px;letter-spacing:-0.01px;">Default</span></div>
<div class="row" style="top:513px"><svg class="a" style="left:3px;top:4px" width="14" height="11" viewBox="0 0 14 11"><ellipse cx="7" cy="5.5" rx="5.8" ry="3.6" fill="#fff" stroke="#222" stroke-width="1.2"/></svg><span class="a" style="left:27.0px;top:4.0px;font-size:11.2px;letter-spacing:-0.23px;">Ряд 05</span><div class="sw" style="background:#b83808"></div><span class="a" style="left:175.9px;top:4.0px;font-size:11.2px;letter-spacing:-0.01px;">Default</span></div>
<div class="row" style="top:532px"><svg class="a" style="left:3px;top:4px" width="14" height="11" viewBox="0 0 14 11"><ellipse cx="7" cy="5.5" rx="5.8" ry="3.6" fill="#fff" stroke="#222" stroke-width="1.2"/></svg><span class="a" style="left:27.0px;top:4.0px;font-size:11.2px;letter-spacing:-0.23px;">Ряд 06</span><div class="sw" style="background:#f87868"></div><span class="a" style="left:175.9px;top:4.0px;font-size:11.2px;letter-spacing:-0.01px;">Default</span></div>
<div class="row" style="top:551px"><svg class="a" style="left:3px;top:4px" width="14" height="11" viewBox="0 0 14 11"><ellipse cx="7" cy="5.5" rx="5.8" ry="3.6" fill="#fff" stroke="#222" stroke-width="1.2"/></svg><span class="a" style="left:27.0px;top:4.0px;font-size:11.2px;letter-spacing:-0.23px;">Ряд 07</span><div class="sw" style="background:#080878"></div><span class="a" style="left:175.9px;top:4.0px;font-size:11.2px;letter-spacing:-0.01px;">Default</span></div>
<div class="row" style="top:570px"><svg class="a" style="left:3px;top:4px" width="14" height="11" viewBox="0 0 14 11"><ellipse cx="7" cy="5.5" rx="5.8" ry="3.6" fill="#fff" stroke="#222" stroke-width="1.2"/></svg><span class="a" style="left:27.0px;top:4.0px;font-size:11.2px;letter-spacing:-0.23px;">Ряд 08</span><div class="sw" style="background:#0808c8"></div><span class="a" style="left:175.9px;top:4.0px;font-size:11.2px;letter-spacing:-0.01px;">Default</span></div>
<div class="row" style="top:589px"><svg class="a" style="left:3px;top:4px" width="14" height="11" viewBox="0 0 14 11"><ellipse cx="7" cy="5.5" rx="5.8" ry="3.6" fill="#fff" stroke="#222" stroke-width="1.2"/></svg><span class="a" style="left:27.0px;top:4.0px;font-size:11.2px;letter-spacing:-0.23px;">Ряд 09</span><div class="sw" style="background:#807810"></div><span class="a" style="left:175.9px;top:4.0px;font-size:11.2px;letter-spacing:-0.01px;">Default</span></div>
<div class="row" style="top:608px"><svg class="a" style="left:3px;top:4px" width="14" height="11" viewBox="0 0 14 11"><ellipse cx="7" cy="5.5" rx="5.8" ry="3.6" fill="#fff" stroke="#222" stroke-width="1.2"/></svg><span class="a" style="left:27.0px;top:4.0px;font-size:11.2px;letter-spacing:-0.23px;">Ряд 10</span><div class="sw" style="background:#f86808"></div><span class="a" style="left:175.9px;top:4.0px;font-size:11.2px;letter-spacing:-0.01px;">Default</span></div>
<div class="row" style="top:627px"><svg class="a" style="left:3px;top:4px" width="14" height="11" viewBox="0 0 14 11"><ellipse cx="7" cy="5.5" rx="5.8" ry="3.6" fill="#fff" stroke="#222" stroke-width="1.2"/></svg><span class="a" style="left:27.0px;top:4.0px;font-size:11.2px;letter-spacing:-0.18px;">Ряд 11</span><div class="sw" style="background:#f84808"></div><span class="a" style="left:175.9px;top:4.0px;font-size:11.2px;letter-spacing:-0.01px;">Default</span></div>
<div class="row" style="top:646px"><svg class="a" style="left:3px;top:4px" width="14" height="11" viewBox="0 0 14 11"><ellipse cx="7" cy="5.5" rx="5.8" ry="3.6" fill="#fff" stroke="#222" stroke-width="1.2"/></svg><span class="a" style="left:27.0px;top:4.0px;font-size:11.2px;letter-spacing:-0.23px;">Ряд 12</span><div class="sw" style="background:#f8b810"></div><span class="a" style="left:175.9px;top:4.0px;font-size:11.2px;letter-spacing:-0.01px;">Default</span></div>
</div>
<div id="status">
<svg class="a" style="left:4px;top:7px" width="50" height="17" viewBox="0 0 50 17"><circle cx="9" cy="8.5" r="6.8" fill="#f4f4f4" stroke="#a8a8a8" stroke-width="1.2"/><circle cx="39" cy="8.5" r="6.8" fill="#f4f4f4" stroke="#a8a8a8" stroke-width="1.2"/><path d="M9,4.5 a2.6,2.6 0 0 1 1.5,4.8 v1.6 h-3 v-1.6 a2.6,2.6 0 0 1 1.5,-4.8z" fill="#888"/><circle cx="39" cy="5" r="1.4" fill="#888"/><path d="M37.3,7.5 h3.4 v5.5 h-3.4z" fill="#888"/></svg>
<div class="a" style="left:62px;top:10px;width:1px;height:10px;background:#8a8a8a"></div>
<span class="a" style="left:72.8px;top:8.9px;font-size:13px;letter-spacing:0.14px;white-space:pre;">Select point to measure to or enter value.  Ctrl = toggle create guides.</span>
<div class="a" style="left:1101px;top:10px;width:1px;height:10px;background:#8a8a8a"></div>
<span class="a" style="left:1112.8px;top:8.9px;font-size:13px;letter-spacing:-0.33px;">Length</span>
<div class="a" style="left:1161px;top:5px;width:200px;height:24px;background:#fff;border:1px solid #e4e4e4"></div>
<span class="a" style="left:1164.5px;top:9.2px;font-size:12.4px;letter-spacing:0.00px;">19,69 cm</span>
</div>
<div id="task">
<div class="a" style="left:296px;top:0;width:48px;height:40px;background:#47575f"></div>
<div class="a" style="left:55px;top:38px;width:40px;height:2px;background:#76b9ed"></div>
<div class="a" style="left:154px;top:38px;width:39px;height:2px;background:#76b9ed"></div>
<div class="a" style="left:202px;top:38px;width:40px;height:2px;background:#76b9ed"></div>
<div class="a" style="left:251px;top:38px;width:40px;height:2px;background:#76b9ed"></div>
<div class="a" style="left:296px;top:38px;width:48px;height:2px;background:#76b9ed"></div>
<svg class="a" style="left:16px;top:12px" width="17" height="17" viewBox="0 0 17 17"><path d="M0,2.4 L7,1.4 V8 H0Z M8,1.25 L17,0 V8 H8Z M0,9 H7 V15.6 L0,14.6Z M8,9 H17 V17 L8,15.75Z" fill="#fff"/></svg>
<svg class="a" style="left:63px;top:9px" width="24" height="22" viewBox="0 0 24 22"><path d="M1,3 h8 l2,2 h12 v15 h-22z" fill="#f4b400"/><path d="M1,7 h22 v13 h-22z" fill="#ffd75e"/><path d="M6,14 h12 v6 h-12z" fill="#3a8ee6"/><path d="M9,14 h6 v2 h-6z" fill="#ffd75e"/></svg>
<svg class="a" style="left:112px;top:9px" width="22" height="22" viewBox="0 0 22 22"><rect x="1" y="1" width="20" height="20" rx="1" fill="#2f8fd8"/><rect x="4" y="12" width="3.5" height="7" fill="#ffd24a"/><rect x="9" y="8" width="3.5" height="11" fill="#ffd24a"/><rect x="14" y="4" width="3.5" height="15" fill="#9fd4f4"/></svg>
<svg class="a" style="left:161px;top:8px" width="24" height="24" viewBox="0 0 24 24"><circle cx="12" cy="12" r="11" fill="#fff"/><path d="M12,12 L2.5,6.5 A11,11 0 0 1 21.5,6.5Z" fill="#e33b2e"/><path d="M12,12 L21.5,6.5 A11,11 0 0 1 12,23Z" fill="#fbc116"/><path d="M12,12 L12,23 A11,11 0 0 1 2.5,6.5Z" fill="#2da94f"/><circle cx="12" cy="12" r="5" fill="#fff"/><circle cx="12" cy="12" r="4" fill="#4a8af4"/><circle cx="16" cy="17" r="5.5" fill="#8a9a78"/></svg>
<svg class="a" style="left:210px;top:8px" width="24" height="24" viewBox="0 0 24 24"><circle cx="12" cy="12" r="11.5" fill="#000"/><g fill="#6fe027"><circle cx="12" cy="5.8" r="3.3"/><circle cx="17.6" cy="9.4" r="3.3"/><circle cx="16" cy="16.2" r="3.3"/><circle cx="8" cy="16.2" r="3.3"/><circle cx="6.4" cy="9.4" r="3.3"/></g><circle cx="12" cy="11.8" r="2.4" fill="#fff"/></svg>
<svg class="a" style="left:259px;top:8px" width="24" height="24" viewBox="0 0 24 24"><circle cx="12" cy="12" r="11" fill="#0f9ff0"/><text x="12" y="17.5" font-family="Liberation Sans,sans-serif" font-weight="bold" font-size="15" fill="#fff" text-anchor="middle">S</text></svg>
<svg class="a" style="left:309px;top:8px" width="22" height="24" viewBox="0 0 22 24"><path d="M1,5 L14.5,0.5 L20.5,8 L19,18.5 L6,23 L2,12.5 Z" fill="#e3262b"/><path d="M1,5 L14.5,0.5 L20.5,8 L8,11.5Z" fill="#f0383c"/><path d="M3.5,8.3 L14.5,4.8 L15.2,6.6 L8,9 L8.4,10.6 L13.5,9 L14,10.8 L9,12.4 L9.6,14.6 L6.4,15.6 L5.8,13.6 L7.6,13 L7.2,11.4 L5,12 Z" fill="#fff"/><path d="M5.6,16.6 L9,15.5 L9.5,17.3 L6.2,18.4Z" fill="#fff"/></svg>
<span class="a" style="left:1063.5px;top:12.6px;font-size:12.2px;letter-spacing:0.32px;color:#fff;">Игры</span>
<svg class="a" style="left:1101px;top:5px" width="10" height="9" viewBox="0 0 10 9"><path d="M1,1.5 L4,4.5 L1,7.5 M5,1.5 L8,4.5 L5,7.5" stroke="#fff" stroke-width="1.3" fill="none"/></svg>
<svg class="a" style="left:1119px;top:13px" width="100" height="16" viewBox="0 0 100 16"><path d="M2.5,10.5 L8,5 L13.5,10.5" stroke="#fff" stroke-width="1.4" fill="none"/><rect x="29" y="4.5" width="10.5" height="7.5" fill="none" stroke="#fff" stroke-width="1.2"/><rect x="39.5" y="6.5" width="1.6" height="3.5" fill="#fff"/><path d="M25,4 v3 h2.5 v2.5 h2 M25.8,2 v2 M27.6,2 v2" stroke="#fff" stroke-width="1.1" fill="none"/><path d="M52,13.5 a9,9 0 0 1 9,-9 M55.3,13.5 a5.8,5.8 0 0 1 5.8,-5.8 M52,9.5 a11.5,11.5 0 0 1 7,-7" stroke="#fff" stroke-width="1.2" fill="none"/><circle cx="60.3" cy="12.7" r="1.4" fill="#fff"/><path d="M73,6 h2.5 l3.5,-3.5 v11 l-3.5,-3.5 h-2.5z" fill="none" stroke="#fff" stroke-width="1.1"/><path d="M81.5,5.5 a3.5,3.5 0 0 1 0,5 M83.8,3.5 a6.5,6.5 0 0 1 0,9" stroke="#9aa4b0" stroke-width="1" fill="none"/></svg>
<span class="a" style="left:1218.1px;top:12.6px;font-size:12.2px;letter-spacing:-1.75px;color:#fff;">РУС</span>
<span class="a" style="left:1265.9px;top:4.0px;font-size:11.8px;letter-spacing:-0.78px;color:#fff;">22:53</span>
<span class="a" style="left:1253.5px;top:22.0px;font-size:11.8px;letter-spacing:-0.78px;color:#fff;">17.03.2021</span>
<svg class="a" style="left:1324px;top:12px" width="18" height="17" viewBox="0 0 18 17"><path d="M1.5,1.5 h15 v11 h-6 l-2.5,3 v-3 h-6.5z" fill="none" stroke="#fff" stroke-width="1.2"/></svg>
</div>
</body></html>
